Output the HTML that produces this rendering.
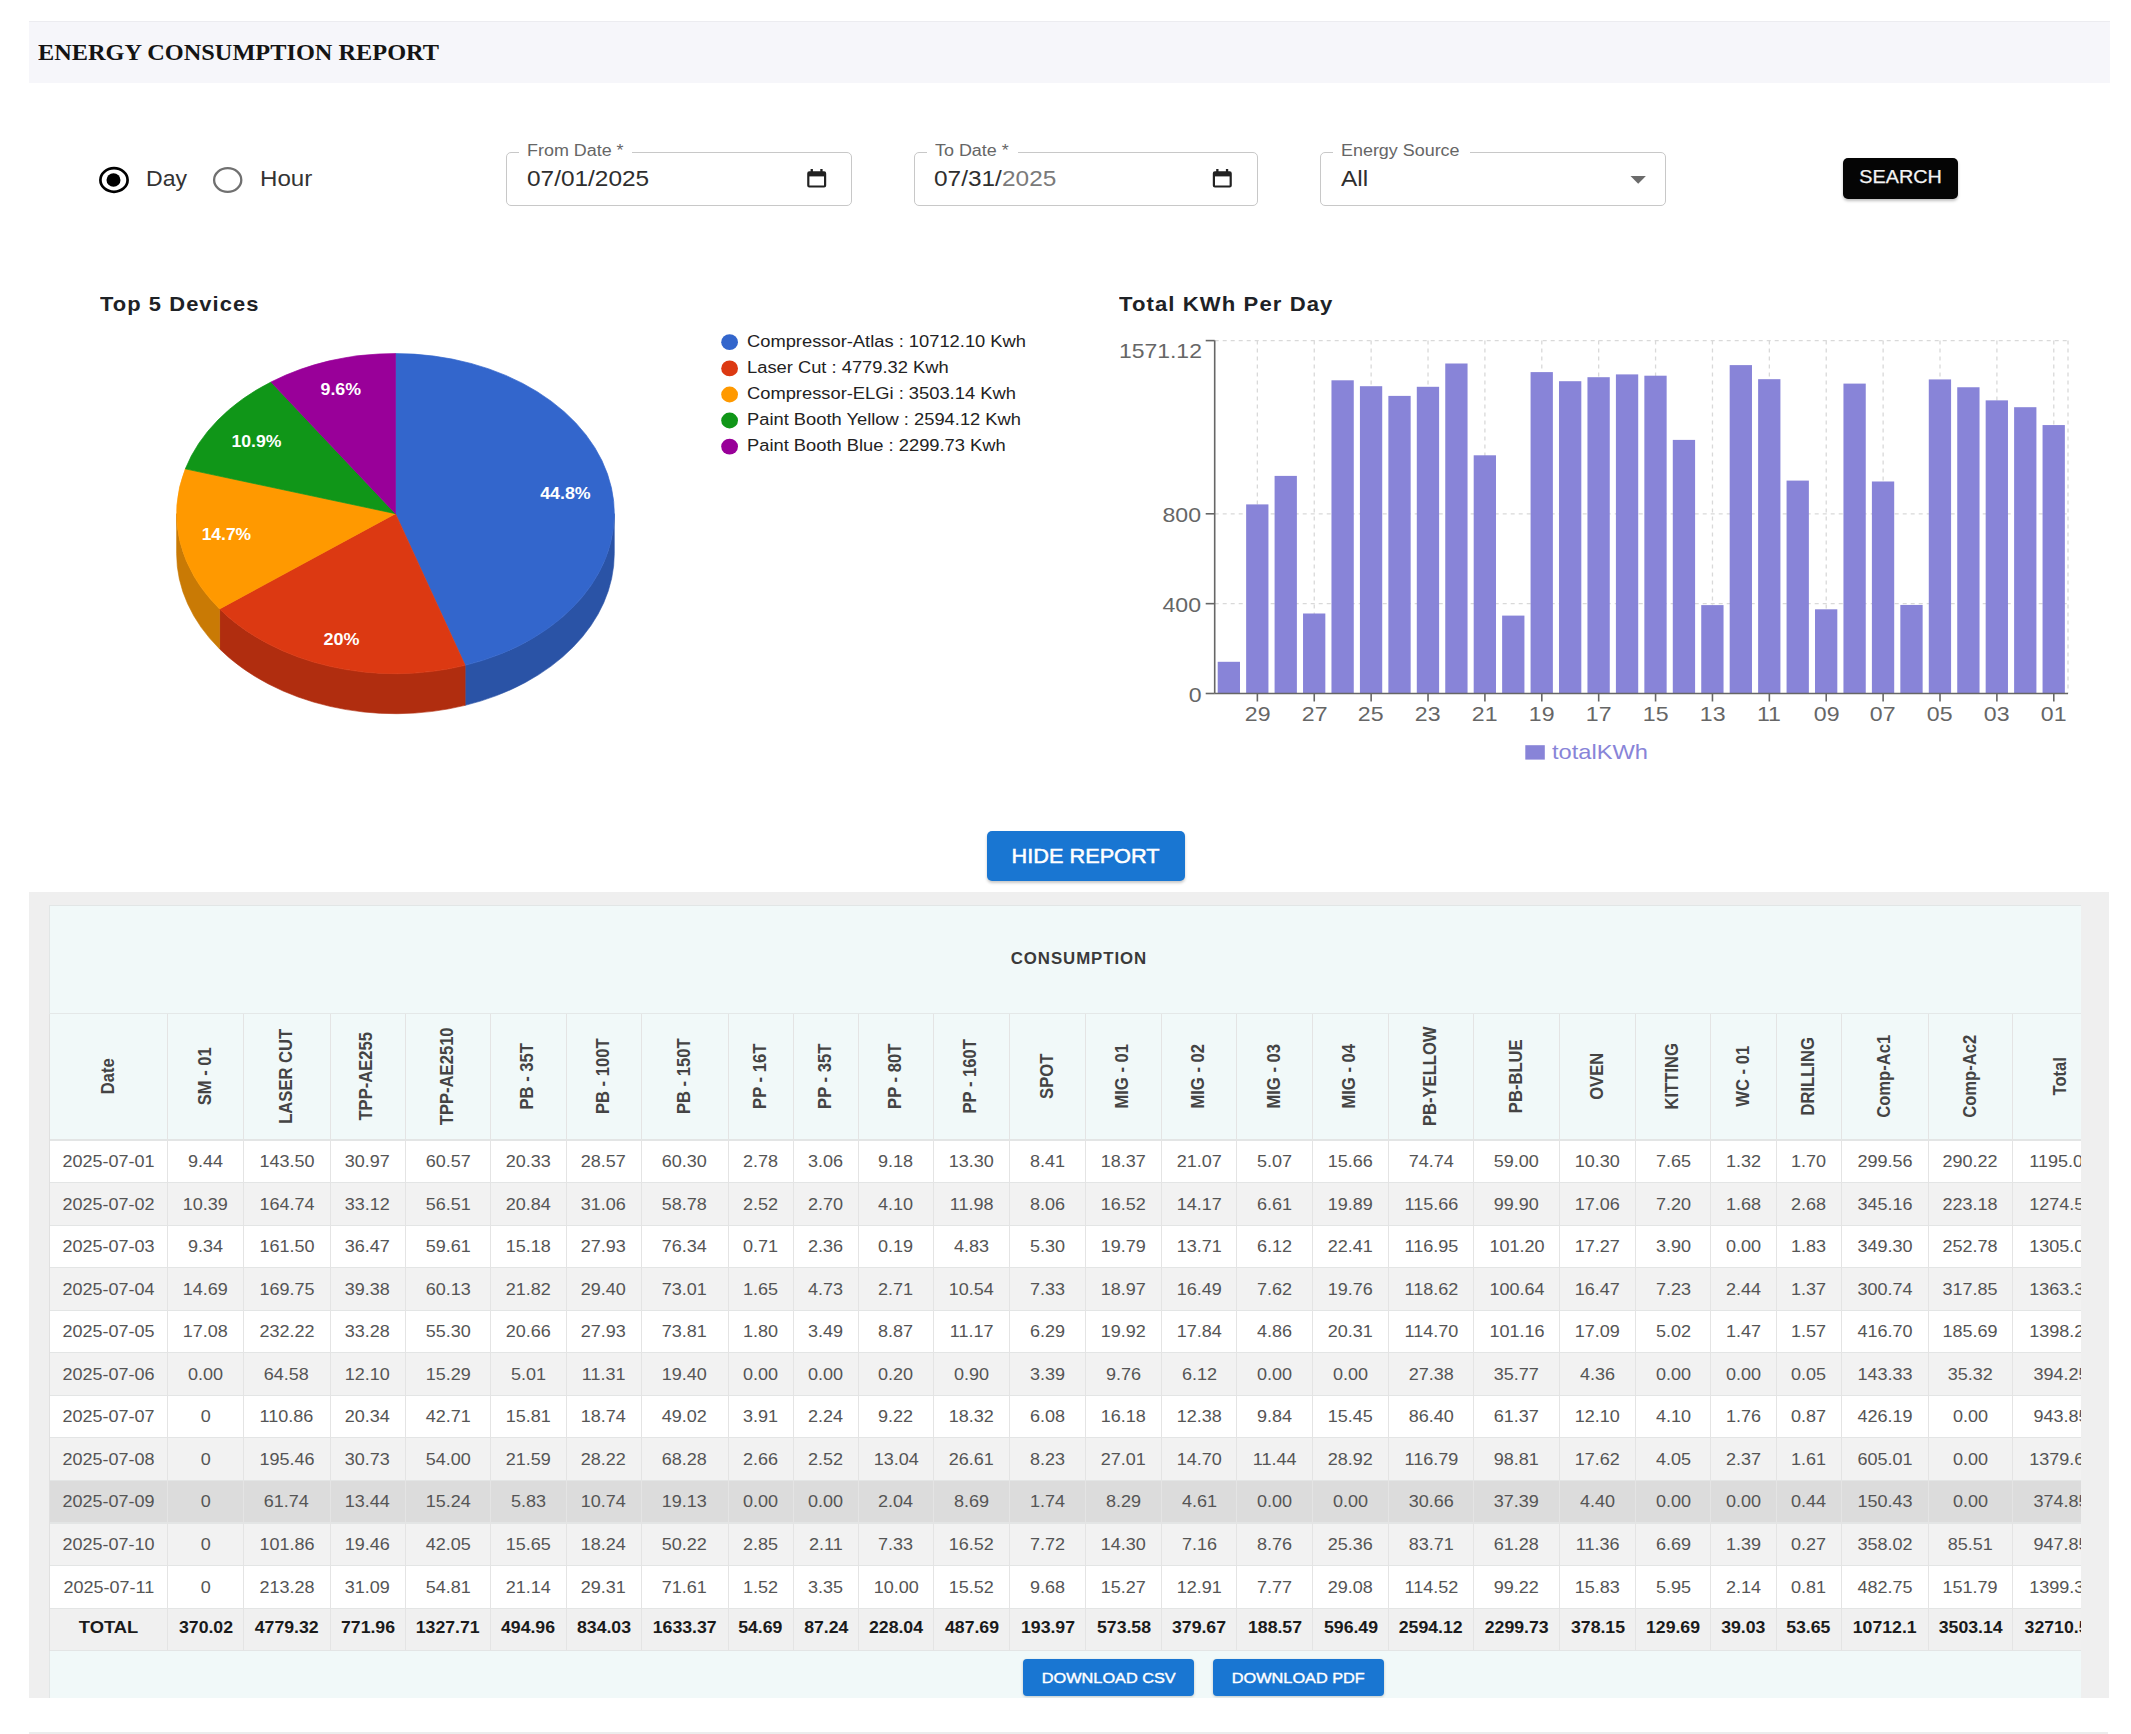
<!DOCTYPE html>
<html><head><meta charset="utf-8"><style>
html,body{margin:0;padding:0;background:#fff;width:2131px;height:1734px;overflow:hidden;position:relative;}
.t{position:absolute;white-space:pre;}
svg{position:absolute;left:0;top:0;}
</style></head><body>
<div style="position:absolute;left:29.00px;top:21.00px;width:2080.50px;height:62.00px;background:#f6f6fa;box-shadow:inset 0 1px 0 #ececf0;"></div>
<div style="position:absolute;left:506.30px;top:152.20px;width:346.10px;height:53.70px;box-sizing:border-box;border:1.4px solid #c8c8c8;border-radius:5px;"></div>
<div style="position:absolute;left:519.30px;top:150.20px;width:112.90px;height:5.00px;background:#fff;"></div>
<div style="position:absolute;left:913.80px;top:152.20px;width:344.20px;height:53.70px;box-sizing:border-box;border:1.4px solid #c8c8c8;border-radius:5px;"></div>
<div style="position:absolute;left:926.50px;top:150.20px;width:91.50px;height:5.00px;background:#fff;"></div>
<div style="position:absolute;left:1319.90px;top:152.20px;width:346.60px;height:53.70px;box-sizing:border-box;border:1.4px solid #c8c8c8;border-radius:5px;"></div>
<div style="position:absolute;left:1332.50px;top:150.20px;width:137.50px;height:5.00px;background:#fff;"></div>
<div style="position:absolute;left:1843.00px;top:157.50px;width:115.00px;height:41.10px;background:#050505;border-radius:5px;box-shadow:0 2px 3px rgba(0,0,0,.25);"></div>
<div style="position:absolute;left:987.30px;top:831.00px;width:198.00px;height:50.10px;background:#1976d2;border-radius:5px;box-shadow:0 2px 3px rgba(0,0,0,.22);"></div>
<div style="position:absolute;left:29.00px;top:891.80px;width:2079.50px;height:806.60px;background:#efefef;"></div>
<div style="position:absolute;left:48.6px;top:905.4px;width:2032.80px;height:793px;overflow:hidden;background:#f1f9f9;box-shadow:inset 1px 1px 0 #e2e6e6;">
<div style="position:absolute;left:0.70px;top:234.60px;width:2060.70px;height:42.55px;background:#ffffff;"></div>
<div style="position:absolute;left:0.70px;top:277.15px;width:2060.70px;height:42.55px;background:#f2f2f2;"></div>
<div style="position:absolute;left:0.70px;top:319.70px;width:2060.70px;height:42.55px;background:#ffffff;"></div>
<div style="position:absolute;left:0.70px;top:362.25px;width:2060.70px;height:42.55px;background:#f2f2f2;"></div>
<div style="position:absolute;left:0.70px;top:404.80px;width:2060.70px;height:42.55px;background:#ffffff;"></div>
<div style="position:absolute;left:0.70px;top:447.35px;width:2060.70px;height:42.55px;background:#f2f2f2;"></div>
<div style="position:absolute;left:0.70px;top:489.90px;width:2060.70px;height:42.55px;background:#ffffff;"></div>
<div style="position:absolute;left:0.70px;top:532.45px;width:2060.70px;height:42.55px;background:#f2f2f2;"></div>
<div style="position:absolute;left:0.70px;top:575.00px;width:2060.70px;height:42.55px;background:#dcdcdc;"></div>
<div style="position:absolute;left:0.70px;top:617.55px;width:2060.70px;height:42.55px;background:#f2f2f2;"></div>
<div style="position:absolute;left:0.70px;top:660.10px;width:2060.70px;height:42.55px;background:#ffffff;"></div>
<div style="position:absolute;left:0.70px;top:702.65px;width:2060.70px;height:42.55px;background:#f0f0f0;"></div>
<div style="position:absolute;left:0.70px;top:234.10px;width:2060.70px;height:1.10px;background:#e3e5e5;"></div>
<div style="position:absolute;left:0.70px;top:276.65px;width:2060.70px;height:1.10px;background:#e3e5e5;"></div>
<div style="position:absolute;left:0.70px;top:319.20px;width:2060.70px;height:1.10px;background:#e3e5e5;"></div>
<div style="position:absolute;left:0.70px;top:361.75px;width:2060.70px;height:1.10px;background:#e3e5e5;"></div>
<div style="position:absolute;left:0.70px;top:404.30px;width:2060.70px;height:1.10px;background:#e3e5e5;"></div>
<div style="position:absolute;left:0.70px;top:446.85px;width:2060.70px;height:1.10px;background:#e3e5e5;"></div>
<div style="position:absolute;left:0.70px;top:489.40px;width:2060.70px;height:1.10px;background:#e3e5e5;"></div>
<div style="position:absolute;left:0.70px;top:531.95px;width:2060.70px;height:1.10px;background:#e3e5e5;"></div>
<div style="position:absolute;left:0.70px;top:574.50px;width:2060.70px;height:1.10px;background:#e3e5e5;"></div>
<div style="position:absolute;left:0.70px;top:617.05px;width:2060.70px;height:1.10px;background:#e3e5e5;"></div>
<div style="position:absolute;left:0.70px;top:659.60px;width:2060.70px;height:1.10px;background:#e3e5e5;"></div>
<div style="position:absolute;left:0.70px;top:702.15px;width:2060.70px;height:1.10px;background:#e3e5e5;"></div>
<div style="position:absolute;left:0.70px;top:744.70px;width:2060.70px;height:1.10px;background:#e3e5e5;"></div>
<div style="position:absolute;left:0.70px;top:107.80px;width:2060.70px;height:1.00px;background:#e4e8e8;"></div>
<div style="position:absolute;left:118.70px;top:108.30px;width:1.00px;height:636.90px;background:#e4e4e4;"></div>
<div style="position:absolute;left:194.20px;top:108.30px;width:1.00px;height:636.90px;background:#e4e4e4;"></div>
<div style="position:absolute;left:281.00px;top:108.30px;width:1.00px;height:636.90px;background:#e4e4e4;"></div>
<div style="position:absolute;left:356.10px;top:108.30px;width:1.00px;height:636.90px;background:#e4e4e4;"></div>
<div style="position:absolute;left:441.40px;top:108.30px;width:1.00px;height:636.90px;background:#e4e4e4;"></div>
<div style="position:absolute;left:517.00px;top:108.30px;width:1.00px;height:636.90px;background:#e4e4e4;"></div>
<div style="position:absolute;left:592.20px;top:108.30px;width:1.00px;height:636.90px;background:#e4e4e4;"></div>
<div style="position:absolute;left:679.10px;top:108.30px;width:1.00px;height:636.90px;background:#e4e4e4;"></div>
<div style="position:absolute;left:744.20px;top:108.30px;width:1.00px;height:636.90px;background:#e4e4e4;"></div>
<div style="position:absolute;left:809.20px;top:108.30px;width:1.00px;height:636.90px;background:#e4e4e4;"></div>
<div style="position:absolute;left:884.30px;top:108.30px;width:1.00px;height:636.90px;background:#e4e4e4;"></div>
<div style="position:absolute;left:960.70px;top:108.30px;width:1.00px;height:636.90px;background:#e4e4e4;"></div>
<div style="position:absolute;left:1036.80px;top:108.30px;width:1.00px;height:636.90px;background:#e4e4e4;"></div>
<div style="position:absolute;left:1112.20px;top:108.30px;width:1.00px;height:636.90px;background:#e4e4e4;"></div>
<div style="position:absolute;left:1187.80px;top:108.30px;width:1.00px;height:636.90px;background:#e4e4e4;"></div>
<div style="position:absolute;left:1263.70px;top:108.30px;width:1.00px;height:636.90px;background:#e4e4e4;"></div>
<div style="position:absolute;left:1339.30px;top:108.30px;width:1.00px;height:636.90px;background:#e4e4e4;"></div>
<div style="position:absolute;left:1424.50px;top:108.30px;width:1.00px;height:636.90px;background:#e4e4e4;"></div>
<div style="position:absolute;left:1510.40px;top:108.30px;width:1.00px;height:636.90px;background:#e4e4e4;"></div>
<div style="position:absolute;left:1586.80px;top:108.30px;width:1.00px;height:636.90px;background:#e4e4e4;"></div>
<div style="position:absolute;left:1661.80px;top:108.30px;width:1.00px;height:636.90px;background:#e4e4e4;"></div>
<div style="position:absolute;left:1727.20px;top:108.30px;width:1.00px;height:636.90px;background:#e4e4e4;"></div>
<div style="position:absolute;left:1792.10px;top:108.30px;width:1.00px;height:636.90px;background:#e4e4e4;"></div>
<div style="position:absolute;left:1879.00px;top:108.30px;width:1.00px;height:636.90px;background:#e4e4e4;"></div>
<div style="position:absolute;left:1963.50px;top:108.30px;width:1.00px;height:636.90px;background:#e4e4e4;"></div>
<div style="position:absolute;left:0.10px;top:108.30px;width:1.20px;height:636.90px;background:#e0e0e0;"></div>
<div style="position:absolute;left:974.60px;top:753.90px;width:170.80px;height:36.80px;background:#1976d2;border-radius:4px;box-shadow:0 1px 3px rgba(0,0,0,.2);"></div>
<div style="position:absolute;left:1164.70px;top:753.90px;width:170.30px;height:36.80px;background:#1976d2;border-radius:4px;box-shadow:0 1px 3px rgba(0,0,0,.2);"></div>
<div style="position:absolute;left:-48.6px;top:-905.4px;width:2131px;height:1734px;">
<div class="t" style="left:1014.45px;top:951.26px;font:bold 16px/16px 'Liberation Sans';color:#3a3a3a;letter-spacing:0.9px;transform:scaleX(1.0508);transform-origin:center 50%;">CONSUMPTION</div>
<div class="t" style="left:65.07px;top:1153.08px;font:normal 17px/17px 'Liberation Sans';color:#555;letter-spacing:0px;transform:scaleX(1.0600);transform-origin:center 50%;">2025-07-01</div>
<div class="t" style="left:189.00px;top:1153.08px;font:normal 17px/17px 'Liberation Sans';color:#555;letter-spacing:0px;transform:scaleX(1.0600);transform-origin:center 50%;">9.44</div>
<div class="t" style="left:260.70px;top:1153.08px;font:normal 17px/17px 'Liberation Sans';color:#555;letter-spacing:0px;transform:scaleX(1.0600);transform-origin:center 50%;">143.50</div>
<div class="t" style="left:346.38px;top:1153.08px;font:normal 17px/17px 'Liberation Sans';color:#555;letter-spacing:0px;transform:scaleX(1.0600);transform-origin:center 50%;">30.97</div>
<div class="t" style="left:426.58px;top:1153.08px;font:normal 17px/17px 'Liberation Sans';color:#555;letter-spacing:0px;transform:scaleX(1.0600);transform-origin:center 50%;">60.57</div>
<div class="t" style="left:507.03px;top:1153.08px;font:normal 17px/17px 'Liberation Sans';color:#555;letter-spacing:0px;transform:scaleX(1.0600);transform-origin:center 50%;">20.33</div>
<div class="t" style="left:582.43px;top:1153.08px;font:normal 17px/17px 'Liberation Sans';color:#555;letter-spacing:0px;transform:scaleX(1.0600);transform-origin:center 50%;">28.57</div>
<div class="t" style="left:663.48px;top:1153.08px;font:normal 17px/17px 'Liberation Sans';color:#555;letter-spacing:0px;transform:scaleX(1.0600);transform-origin:center 50%;">60.30</div>
<div class="t" style="left:744.20px;top:1153.08px;font:normal 17px/17px 'Liberation Sans';color:#555;letter-spacing:0px;transform:scaleX(1.0600);transform-origin:center 50%;">2.78</div>
<div class="t" style="left:809.25px;top:1153.08px;font:normal 17px/17px 'Liberation Sans';color:#555;letter-spacing:0px;transform:scaleX(1.0600);transform-origin:center 50%;">3.06</div>
<div class="t" style="left:879.30px;top:1153.08px;font:normal 17px/17px 'Liberation Sans';color:#555;letter-spacing:0px;transform:scaleX(1.0600);transform-origin:center 50%;">9.18</div>
<div class="t" style="left:950.33px;top:1153.08px;font:normal 17px/17px 'Liberation Sans';color:#555;letter-spacing:0px;transform:scaleX(1.0600);transform-origin:center 50%;">13.30</div>
<div class="t" style="left:1031.30px;top:1153.08px;font:normal 17px/17px 'Liberation Sans';color:#555;letter-spacing:0px;transform:scaleX(1.0600);transform-origin:center 50%;">8.41</div>
<div class="t" style="left:1102.33px;top:1153.08px;font:normal 17px/17px 'Liberation Sans';color:#555;letter-spacing:0px;transform:scaleX(1.0600);transform-origin:center 50%;">18.37</div>
<div class="t" style="left:1177.83px;top:1153.08px;font:normal 17px/17px 'Liberation Sans';color:#555;letter-spacing:0px;transform:scaleX(1.0600);transform-origin:center 50%;">21.07</div>
<div class="t" style="left:1258.30px;top:1153.08px;font:normal 17px/17px 'Liberation Sans';color:#555;letter-spacing:0px;transform:scaleX(1.0600);transform-origin:center 50%;">5.07</div>
<div class="t" style="left:1329.33px;top:1153.08px;font:normal 17px/17px 'Liberation Sans';color:#555;letter-spacing:0px;transform:scaleX(1.0600);transform-origin:center 50%;">15.66</div>
<div class="t" style="left:1409.73px;top:1153.08px;font:normal 17px/17px 'Liberation Sans';color:#555;letter-spacing:0px;transform:scaleX(1.0600);transform-origin:center 50%;">74.74</div>
<div class="t" style="left:1495.28px;top:1153.08px;font:normal 17px/17px 'Liberation Sans';color:#555;letter-spacing:0px;transform:scaleX(1.0600);transform-origin:center 50%;">59.00</div>
<div class="t" style="left:1576.43px;top:1153.08px;font:normal 17px/17px 'Liberation Sans';color:#555;letter-spacing:0px;transform:scaleX(1.0600);transform-origin:center 50%;">10.30</div>
<div class="t" style="left:1656.85px;top:1153.08px;font:normal 17px/17px 'Liberation Sans';color:#555;letter-spacing:0px;transform:scaleX(1.0600);transform-origin:center 50%;">7.65</div>
<div class="t" style="left:1727.05px;top:1153.08px;font:normal 17px/17px 'Liberation Sans';color:#555;letter-spacing:0px;transform:scaleX(1.0600);transform-origin:center 50%;">1.32</div>
<div class="t" style="left:1792.20px;top:1153.08px;font:normal 17px/17px 'Liberation Sans';color:#555;letter-spacing:0px;transform:scaleX(1.0600);transform-origin:center 50%;">1.70</div>
<div class="t" style="left:1858.65px;top:1153.08px;font:normal 17px/17px 'Liberation Sans';color:#555;letter-spacing:0px;transform:scaleX(1.0600);transform-origin:center 50%;">299.56</div>
<div class="t" style="left:1944.35px;top:1153.08px;font:normal 17px/17px 'Liberation Sans';color:#555;letter-spacing:0px;transform:scaleX(1.0600);transform-origin:center 50%;">290.22</div>
<div class="t" style="left:2031.20px;top:1153.08px;font:normal 17px/17px 'Liberation Sans';color:#555;letter-spacing:0px;transform:scaleX(1.0600);transform-origin:center 50%;">1195.04</div>
<div class="t" style="left:65.07px;top:1195.63px;font:normal 17px/17px 'Liberation Sans';color:#555;letter-spacing:0px;transform:scaleX(1.0600);transform-origin:center 50%;">2025-07-02</div>
<div class="t" style="left:184.28px;top:1195.63px;font:normal 17px/17px 'Liberation Sans';color:#555;letter-spacing:0px;transform:scaleX(1.0600);transform-origin:center 50%;">10.39</div>
<div class="t" style="left:260.70px;top:1195.63px;font:normal 17px/17px 'Liberation Sans';color:#555;letter-spacing:0px;transform:scaleX(1.0600);transform-origin:center 50%;">164.74</div>
<div class="t" style="left:346.38px;top:1195.63px;font:normal 17px/17px 'Liberation Sans';color:#555;letter-spacing:0px;transform:scaleX(1.0600);transform-origin:center 50%;">33.12</div>
<div class="t" style="left:426.58px;top:1195.63px;font:normal 17px/17px 'Liberation Sans';color:#555;letter-spacing:0px;transform:scaleX(1.0600);transform-origin:center 50%;">56.51</div>
<div class="t" style="left:507.03px;top:1195.63px;font:normal 17px/17px 'Liberation Sans';color:#555;letter-spacing:0px;transform:scaleX(1.0600);transform-origin:center 50%;">20.84</div>
<div class="t" style="left:582.43px;top:1195.63px;font:normal 17px/17px 'Liberation Sans';color:#555;letter-spacing:0px;transform:scaleX(1.0600);transform-origin:center 50%;">31.06</div>
<div class="t" style="left:663.48px;top:1195.63px;font:normal 17px/17px 'Liberation Sans';color:#555;letter-spacing:0px;transform:scaleX(1.0600);transform-origin:center 50%;">58.78</div>
<div class="t" style="left:744.20px;top:1195.63px;font:normal 17px/17px 'Liberation Sans';color:#555;letter-spacing:0px;transform:scaleX(1.0600);transform-origin:center 50%;">2.52</div>
<div class="t" style="left:809.25px;top:1195.63px;font:normal 17px/17px 'Liberation Sans';color:#555;letter-spacing:0px;transform:scaleX(1.0600);transform-origin:center 50%;">2.70</div>
<div class="t" style="left:879.30px;top:1195.63px;font:normal 17px/17px 'Liberation Sans';color:#555;letter-spacing:0px;transform:scaleX(1.0600);transform-origin:center 50%;">4.10</div>
<div class="t" style="left:950.96px;top:1195.63px;font:normal 17px/17px 'Liberation Sans';color:#555;letter-spacing:0px;transform:scaleX(1.0600);transform-origin:center 50%;">11.98</div>
<div class="t" style="left:1031.30px;top:1195.63px;font:normal 17px/17px 'Liberation Sans';color:#555;letter-spacing:0px;transform:scaleX(1.0600);transform-origin:center 50%;">8.06</div>
<div class="t" style="left:1102.33px;top:1195.63px;font:normal 17px/17px 'Liberation Sans';color:#555;letter-spacing:0px;transform:scaleX(1.0600);transform-origin:center 50%;">16.52</div>
<div class="t" style="left:1177.83px;top:1195.63px;font:normal 17px/17px 'Liberation Sans';color:#555;letter-spacing:0px;transform:scaleX(1.0600);transform-origin:center 50%;">14.17</div>
<div class="t" style="left:1258.30px;top:1195.63px;font:normal 17px/17px 'Liberation Sans';color:#555;letter-spacing:0px;transform:scaleX(1.0600);transform-origin:center 50%;">6.61</div>
<div class="t" style="left:1329.33px;top:1195.63px;font:normal 17px/17px 'Liberation Sans';color:#555;letter-spacing:0px;transform:scaleX(1.0600);transform-origin:center 50%;">19.89</div>
<div class="t" style="left:1405.63px;top:1195.63px;font:normal 17px/17px 'Liberation Sans';color:#555;letter-spacing:0px;transform:scaleX(1.0600);transform-origin:center 50%;">115.66</div>
<div class="t" style="left:1495.28px;top:1195.63px;font:normal 17px/17px 'Liberation Sans';color:#555;letter-spacing:0px;transform:scaleX(1.0600);transform-origin:center 50%;">99.90</div>
<div class="t" style="left:1576.43px;top:1195.63px;font:normal 17px/17px 'Liberation Sans';color:#555;letter-spacing:0px;transform:scaleX(1.0600);transform-origin:center 50%;">17.06</div>
<div class="t" style="left:1656.85px;top:1195.63px;font:normal 17px/17px 'Liberation Sans';color:#555;letter-spacing:0px;transform:scaleX(1.0600);transform-origin:center 50%;">7.20</div>
<div class="t" style="left:1727.05px;top:1195.63px;font:normal 17px/17px 'Liberation Sans';color:#555;letter-spacing:0px;transform:scaleX(1.0600);transform-origin:center 50%;">1.68</div>
<div class="t" style="left:1792.20px;top:1195.63px;font:normal 17px/17px 'Liberation Sans';color:#555;letter-spacing:0px;transform:scaleX(1.0600);transform-origin:center 50%;">2.68</div>
<div class="t" style="left:1858.65px;top:1195.63px;font:normal 17px/17px 'Liberation Sans';color:#555;letter-spacing:0px;transform:scaleX(1.0600);transform-origin:center 50%;">345.16</div>
<div class="t" style="left:1944.35px;top:1195.63px;font:normal 17px/17px 'Liberation Sans';color:#555;letter-spacing:0px;transform:scaleX(1.0600);transform-origin:center 50%;">223.18</div>
<div class="t" style="left:2030.57px;top:1195.63px;font:normal 17px/17px 'Liberation Sans';color:#555;letter-spacing:0px;transform:scaleX(1.0600);transform-origin:center 50%;">1274.55</div>
<div class="t" style="left:65.07px;top:1238.18px;font:normal 17px/17px 'Liberation Sans';color:#555;letter-spacing:0px;transform:scaleX(1.0600);transform-origin:center 50%;">2025-07-03</div>
<div class="t" style="left:189.00px;top:1238.18px;font:normal 17px/17px 'Liberation Sans';color:#555;letter-spacing:0px;transform:scaleX(1.0600);transform-origin:center 50%;">9.34</div>
<div class="t" style="left:260.70px;top:1238.18px;font:normal 17px/17px 'Liberation Sans';color:#555;letter-spacing:0px;transform:scaleX(1.0600);transform-origin:center 50%;">161.50</div>
<div class="t" style="left:346.38px;top:1238.18px;font:normal 17px/17px 'Liberation Sans';color:#555;letter-spacing:0px;transform:scaleX(1.0600);transform-origin:center 50%;">36.47</div>
<div class="t" style="left:426.58px;top:1238.18px;font:normal 17px/17px 'Liberation Sans';color:#555;letter-spacing:0px;transform:scaleX(1.0600);transform-origin:center 50%;">59.61</div>
<div class="t" style="left:507.03px;top:1238.18px;font:normal 17px/17px 'Liberation Sans';color:#555;letter-spacing:0px;transform:scaleX(1.0600);transform-origin:center 50%;">15.18</div>
<div class="t" style="left:582.43px;top:1238.18px;font:normal 17px/17px 'Liberation Sans';color:#555;letter-spacing:0px;transform:scaleX(1.0600);transform-origin:center 50%;">27.93</div>
<div class="t" style="left:663.48px;top:1238.18px;font:normal 17px/17px 'Liberation Sans';color:#555;letter-spacing:0px;transform:scaleX(1.0600);transform-origin:center 50%;">76.34</div>
<div class="t" style="left:744.20px;top:1238.18px;font:normal 17px/17px 'Liberation Sans';color:#555;letter-spacing:0px;transform:scaleX(1.0600);transform-origin:center 50%;">0.71</div>
<div class="t" style="left:809.25px;top:1238.18px;font:normal 17px/17px 'Liberation Sans';color:#555;letter-spacing:0px;transform:scaleX(1.0600);transform-origin:center 50%;">2.36</div>
<div class="t" style="left:879.30px;top:1238.18px;font:normal 17px/17px 'Liberation Sans';color:#555;letter-spacing:0px;transform:scaleX(1.0600);transform-origin:center 50%;">0.19</div>
<div class="t" style="left:955.05px;top:1238.18px;font:normal 17px/17px 'Liberation Sans';color:#555;letter-spacing:0px;transform:scaleX(1.0600);transform-origin:center 50%;">4.83</div>
<div class="t" style="left:1031.30px;top:1238.18px;font:normal 17px/17px 'Liberation Sans';color:#555;letter-spacing:0px;transform:scaleX(1.0600);transform-origin:center 50%;">5.30</div>
<div class="t" style="left:1102.33px;top:1238.18px;font:normal 17px/17px 'Liberation Sans';color:#555;letter-spacing:0px;transform:scaleX(1.0600);transform-origin:center 50%;">19.79</div>
<div class="t" style="left:1177.83px;top:1238.18px;font:normal 17px/17px 'Liberation Sans';color:#555;letter-spacing:0px;transform:scaleX(1.0600);transform-origin:center 50%;">13.71</div>
<div class="t" style="left:1258.30px;top:1238.18px;font:normal 17px/17px 'Liberation Sans';color:#555;letter-spacing:0px;transform:scaleX(1.0600);transform-origin:center 50%;">6.12</div>
<div class="t" style="left:1329.33px;top:1238.18px;font:normal 17px/17px 'Liberation Sans';color:#555;letter-spacing:0px;transform:scaleX(1.0600);transform-origin:center 50%;">22.41</div>
<div class="t" style="left:1405.63px;top:1238.18px;font:normal 17px/17px 'Liberation Sans';color:#555;letter-spacing:0px;transform:scaleX(1.0600);transform-origin:center 50%;">116.95</div>
<div class="t" style="left:1490.55px;top:1238.18px;font:normal 17px/17px 'Liberation Sans';color:#555;letter-spacing:0px;transform:scaleX(1.0600);transform-origin:center 50%;">101.20</div>
<div class="t" style="left:1576.43px;top:1238.18px;font:normal 17px/17px 'Liberation Sans';color:#555;letter-spacing:0px;transform:scaleX(1.0600);transform-origin:center 50%;">17.27</div>
<div class="t" style="left:1656.85px;top:1238.18px;font:normal 17px/17px 'Liberation Sans';color:#555;letter-spacing:0px;transform:scaleX(1.0600);transform-origin:center 50%;">3.90</div>
<div class="t" style="left:1727.05px;top:1238.18px;font:normal 17px/17px 'Liberation Sans';color:#555;letter-spacing:0px;transform:scaleX(1.0600);transform-origin:center 50%;">0.00</div>
<div class="t" style="left:1792.20px;top:1238.18px;font:normal 17px/17px 'Liberation Sans';color:#555;letter-spacing:0px;transform:scaleX(1.0600);transform-origin:center 50%;">1.83</div>
<div class="t" style="left:1858.65px;top:1238.18px;font:normal 17px/17px 'Liberation Sans';color:#555;letter-spacing:0px;transform:scaleX(1.0600);transform-origin:center 50%;">349.30</div>
<div class="t" style="left:1944.35px;top:1238.18px;font:normal 17px/17px 'Liberation Sans';color:#555;letter-spacing:0px;transform:scaleX(1.0600);transform-origin:center 50%;">252.78</div>
<div class="t" style="left:2030.57px;top:1238.18px;font:normal 17px/17px 'Liberation Sans';color:#555;letter-spacing:0px;transform:scaleX(1.0600);transform-origin:center 50%;">1305.05</div>
<div class="t" style="left:65.07px;top:1280.73px;font:normal 17px/17px 'Liberation Sans';color:#555;letter-spacing:0px;transform:scaleX(1.0600);transform-origin:center 50%;">2025-07-04</div>
<div class="t" style="left:184.28px;top:1280.73px;font:normal 17px/17px 'Liberation Sans';color:#555;letter-spacing:0px;transform:scaleX(1.0600);transform-origin:center 50%;">14.69</div>
<div class="t" style="left:260.70px;top:1280.73px;font:normal 17px/17px 'Liberation Sans';color:#555;letter-spacing:0px;transform:scaleX(1.0600);transform-origin:center 50%;">169.75</div>
<div class="t" style="left:346.38px;top:1280.73px;font:normal 17px/17px 'Liberation Sans';color:#555;letter-spacing:0px;transform:scaleX(1.0600);transform-origin:center 50%;">39.38</div>
<div class="t" style="left:426.58px;top:1280.73px;font:normal 17px/17px 'Liberation Sans';color:#555;letter-spacing:0px;transform:scaleX(1.0600);transform-origin:center 50%;">60.13</div>
<div class="t" style="left:507.03px;top:1280.73px;font:normal 17px/17px 'Liberation Sans';color:#555;letter-spacing:0px;transform:scaleX(1.0600);transform-origin:center 50%;">21.82</div>
<div class="t" style="left:582.43px;top:1280.73px;font:normal 17px/17px 'Liberation Sans';color:#555;letter-spacing:0px;transform:scaleX(1.0600);transform-origin:center 50%;">29.40</div>
<div class="t" style="left:663.48px;top:1280.73px;font:normal 17px/17px 'Liberation Sans';color:#555;letter-spacing:0px;transform:scaleX(1.0600);transform-origin:center 50%;">73.01</div>
<div class="t" style="left:744.20px;top:1280.73px;font:normal 17px/17px 'Liberation Sans';color:#555;letter-spacing:0px;transform:scaleX(1.0600);transform-origin:center 50%;">1.65</div>
<div class="t" style="left:809.25px;top:1280.73px;font:normal 17px/17px 'Liberation Sans';color:#555;letter-spacing:0px;transform:scaleX(1.0600);transform-origin:center 50%;">4.73</div>
<div class="t" style="left:879.30px;top:1280.73px;font:normal 17px/17px 'Liberation Sans';color:#555;letter-spacing:0px;transform:scaleX(1.0600);transform-origin:center 50%;">2.71</div>
<div class="t" style="left:950.33px;top:1280.73px;font:normal 17px/17px 'Liberation Sans';color:#555;letter-spacing:0px;transform:scaleX(1.0600);transform-origin:center 50%;">10.54</div>
<div class="t" style="left:1031.30px;top:1280.73px;font:normal 17px/17px 'Liberation Sans';color:#555;letter-spacing:0px;transform:scaleX(1.0600);transform-origin:center 50%;">7.33</div>
<div class="t" style="left:1102.33px;top:1280.73px;font:normal 17px/17px 'Liberation Sans';color:#555;letter-spacing:0px;transform:scaleX(1.0600);transform-origin:center 50%;">18.97</div>
<div class="t" style="left:1177.83px;top:1280.73px;font:normal 17px/17px 'Liberation Sans';color:#555;letter-spacing:0px;transform:scaleX(1.0600);transform-origin:center 50%;">16.49</div>
<div class="t" style="left:1258.30px;top:1280.73px;font:normal 17px/17px 'Liberation Sans';color:#555;letter-spacing:0px;transform:scaleX(1.0600);transform-origin:center 50%;">7.62</div>
<div class="t" style="left:1329.33px;top:1280.73px;font:normal 17px/17px 'Liberation Sans';color:#555;letter-spacing:0px;transform:scaleX(1.0600);transform-origin:center 50%;">19.76</div>
<div class="t" style="left:1405.63px;top:1280.73px;font:normal 17px/17px 'Liberation Sans';color:#555;letter-spacing:0px;transform:scaleX(1.0600);transform-origin:center 50%;">118.62</div>
<div class="t" style="left:1490.55px;top:1280.73px;font:normal 17px/17px 'Liberation Sans';color:#555;letter-spacing:0px;transform:scaleX(1.0600);transform-origin:center 50%;">100.64</div>
<div class="t" style="left:1576.43px;top:1280.73px;font:normal 17px/17px 'Liberation Sans';color:#555;letter-spacing:0px;transform:scaleX(1.0600);transform-origin:center 50%;">16.47</div>
<div class="t" style="left:1656.85px;top:1280.73px;font:normal 17px/17px 'Liberation Sans';color:#555;letter-spacing:0px;transform:scaleX(1.0600);transform-origin:center 50%;">7.23</div>
<div class="t" style="left:1727.05px;top:1280.73px;font:normal 17px/17px 'Liberation Sans';color:#555;letter-spacing:0px;transform:scaleX(1.0600);transform-origin:center 50%;">2.44</div>
<div class="t" style="left:1792.20px;top:1280.73px;font:normal 17px/17px 'Liberation Sans';color:#555;letter-spacing:0px;transform:scaleX(1.0600);transform-origin:center 50%;">1.37</div>
<div class="t" style="left:1858.65px;top:1280.73px;font:normal 17px/17px 'Liberation Sans';color:#555;letter-spacing:0px;transform:scaleX(1.0600);transform-origin:center 50%;">300.74</div>
<div class="t" style="left:1944.35px;top:1280.73px;font:normal 17px/17px 'Liberation Sans';color:#555;letter-spacing:0px;transform:scaleX(1.0600);transform-origin:center 50%;">317.85</div>
<div class="t" style="left:2030.57px;top:1280.73px;font:normal 17px/17px 'Liberation Sans';color:#555;letter-spacing:0px;transform:scaleX(1.0600);transform-origin:center 50%;">1363.33</div>
<div class="t" style="left:65.07px;top:1323.28px;font:normal 17px/17px 'Liberation Sans';color:#555;letter-spacing:0px;transform:scaleX(1.0600);transform-origin:center 50%;">2025-07-05</div>
<div class="t" style="left:184.28px;top:1323.28px;font:normal 17px/17px 'Liberation Sans';color:#555;letter-spacing:0px;transform:scaleX(1.0600);transform-origin:center 50%;">17.08</div>
<div class="t" style="left:260.70px;top:1323.28px;font:normal 17px/17px 'Liberation Sans';color:#555;letter-spacing:0px;transform:scaleX(1.0600);transform-origin:center 50%;">232.22</div>
<div class="t" style="left:346.38px;top:1323.28px;font:normal 17px/17px 'Liberation Sans';color:#555;letter-spacing:0px;transform:scaleX(1.0600);transform-origin:center 50%;">33.28</div>
<div class="t" style="left:426.58px;top:1323.28px;font:normal 17px/17px 'Liberation Sans';color:#555;letter-spacing:0px;transform:scaleX(1.0600);transform-origin:center 50%;">55.30</div>
<div class="t" style="left:507.03px;top:1323.28px;font:normal 17px/17px 'Liberation Sans';color:#555;letter-spacing:0px;transform:scaleX(1.0600);transform-origin:center 50%;">20.66</div>
<div class="t" style="left:582.43px;top:1323.28px;font:normal 17px/17px 'Liberation Sans';color:#555;letter-spacing:0px;transform:scaleX(1.0600);transform-origin:center 50%;">27.93</div>
<div class="t" style="left:663.48px;top:1323.28px;font:normal 17px/17px 'Liberation Sans';color:#555;letter-spacing:0px;transform:scaleX(1.0600);transform-origin:center 50%;">73.81</div>
<div class="t" style="left:744.20px;top:1323.28px;font:normal 17px/17px 'Liberation Sans';color:#555;letter-spacing:0px;transform:scaleX(1.0600);transform-origin:center 50%;">1.80</div>
<div class="t" style="left:809.25px;top:1323.28px;font:normal 17px/17px 'Liberation Sans';color:#555;letter-spacing:0px;transform:scaleX(1.0600);transform-origin:center 50%;">3.49</div>
<div class="t" style="left:879.30px;top:1323.28px;font:normal 17px/17px 'Liberation Sans';color:#555;letter-spacing:0px;transform:scaleX(1.0600);transform-origin:center 50%;">8.87</div>
<div class="t" style="left:950.96px;top:1323.28px;font:normal 17px/17px 'Liberation Sans';color:#555;letter-spacing:0px;transform:scaleX(1.0600);transform-origin:center 50%;">11.17</div>
<div class="t" style="left:1031.30px;top:1323.28px;font:normal 17px/17px 'Liberation Sans';color:#555;letter-spacing:0px;transform:scaleX(1.0600);transform-origin:center 50%;">6.29</div>
<div class="t" style="left:1102.33px;top:1323.28px;font:normal 17px/17px 'Liberation Sans';color:#555;letter-spacing:0px;transform:scaleX(1.0600);transform-origin:center 50%;">19.92</div>
<div class="t" style="left:1177.83px;top:1323.28px;font:normal 17px/17px 'Liberation Sans';color:#555;letter-spacing:0px;transform:scaleX(1.0600);transform-origin:center 50%;">17.84</div>
<div class="t" style="left:1258.30px;top:1323.28px;font:normal 17px/17px 'Liberation Sans';color:#555;letter-spacing:0px;transform:scaleX(1.0600);transform-origin:center 50%;">4.86</div>
<div class="t" style="left:1329.33px;top:1323.28px;font:normal 17px/17px 'Liberation Sans';color:#555;letter-spacing:0px;transform:scaleX(1.0600);transform-origin:center 50%;">20.31</div>
<div class="t" style="left:1405.63px;top:1323.28px;font:normal 17px/17px 'Liberation Sans';color:#555;letter-spacing:0px;transform:scaleX(1.0600);transform-origin:center 50%;">114.70</div>
<div class="t" style="left:1490.55px;top:1323.28px;font:normal 17px/17px 'Liberation Sans';color:#555;letter-spacing:0px;transform:scaleX(1.0600);transform-origin:center 50%;">101.16</div>
<div class="t" style="left:1576.43px;top:1323.28px;font:normal 17px/17px 'Liberation Sans';color:#555;letter-spacing:0px;transform:scaleX(1.0600);transform-origin:center 50%;">17.09</div>
<div class="t" style="left:1656.85px;top:1323.28px;font:normal 17px/17px 'Liberation Sans';color:#555;letter-spacing:0px;transform:scaleX(1.0600);transform-origin:center 50%;">5.02</div>
<div class="t" style="left:1727.05px;top:1323.28px;font:normal 17px/17px 'Liberation Sans';color:#555;letter-spacing:0px;transform:scaleX(1.0600);transform-origin:center 50%;">1.47</div>
<div class="t" style="left:1792.20px;top:1323.28px;font:normal 17px/17px 'Liberation Sans';color:#555;letter-spacing:0px;transform:scaleX(1.0600);transform-origin:center 50%;">1.57</div>
<div class="t" style="left:1858.65px;top:1323.28px;font:normal 17px/17px 'Liberation Sans';color:#555;letter-spacing:0px;transform:scaleX(1.0600);transform-origin:center 50%;">416.70</div>
<div class="t" style="left:1944.35px;top:1323.28px;font:normal 17px/17px 'Liberation Sans';color:#555;letter-spacing:0px;transform:scaleX(1.0600);transform-origin:center 50%;">185.69</div>
<div class="t" style="left:2030.57px;top:1323.28px;font:normal 17px/17px 'Liberation Sans';color:#555;letter-spacing:0px;transform:scaleX(1.0600);transform-origin:center 50%;">1398.25</div>
<div class="t" style="left:65.07px;top:1365.83px;font:normal 17px/17px 'Liberation Sans';color:#555;letter-spacing:0px;transform:scaleX(1.0600);transform-origin:center 50%;">2025-07-06</div>
<div class="t" style="left:189.00px;top:1365.83px;font:normal 17px/17px 'Liberation Sans';color:#555;letter-spacing:0px;transform:scaleX(1.0600);transform-origin:center 50%;">0.00</div>
<div class="t" style="left:265.43px;top:1365.83px;font:normal 17px/17px 'Liberation Sans';color:#555;letter-spacing:0px;transform:scaleX(1.0600);transform-origin:center 50%;">64.58</div>
<div class="t" style="left:346.38px;top:1365.83px;font:normal 17px/17px 'Liberation Sans';color:#555;letter-spacing:0px;transform:scaleX(1.0600);transform-origin:center 50%;">12.10</div>
<div class="t" style="left:426.58px;top:1365.83px;font:normal 17px/17px 'Liberation Sans';color:#555;letter-spacing:0px;transform:scaleX(1.0600);transform-origin:center 50%;">15.29</div>
<div class="t" style="left:511.75px;top:1365.83px;font:normal 17px/17px 'Liberation Sans';color:#555;letter-spacing:0px;transform:scaleX(1.0600);transform-origin:center 50%;">5.01</div>
<div class="t" style="left:583.06px;top:1365.83px;font:normal 17px/17px 'Liberation Sans';color:#555;letter-spacing:0px;transform:scaleX(1.0600);transform-origin:center 50%;">11.31</div>
<div class="t" style="left:663.48px;top:1365.83px;font:normal 17px/17px 'Liberation Sans';color:#555;letter-spacing:0px;transform:scaleX(1.0600);transform-origin:center 50%;">19.40</div>
<div class="t" style="left:744.20px;top:1365.83px;font:normal 17px/17px 'Liberation Sans';color:#555;letter-spacing:0px;transform:scaleX(1.0600);transform-origin:center 50%;">0.00</div>
<div class="t" style="left:809.25px;top:1365.83px;font:normal 17px/17px 'Liberation Sans';color:#555;letter-spacing:0px;transform:scaleX(1.0600);transform-origin:center 50%;">0.00</div>
<div class="t" style="left:879.30px;top:1365.83px;font:normal 17px/17px 'Liberation Sans';color:#555;letter-spacing:0px;transform:scaleX(1.0600);transform-origin:center 50%;">0.20</div>
<div class="t" style="left:955.05px;top:1365.83px;font:normal 17px/17px 'Liberation Sans';color:#555;letter-spacing:0px;transform:scaleX(1.0600);transform-origin:center 50%;">0.90</div>
<div class="t" style="left:1031.30px;top:1365.83px;font:normal 17px/17px 'Liberation Sans';color:#555;letter-spacing:0px;transform:scaleX(1.0600);transform-origin:center 50%;">3.39</div>
<div class="t" style="left:1107.05px;top:1365.83px;font:normal 17px/17px 'Liberation Sans';color:#555;letter-spacing:0px;transform:scaleX(1.0600);transform-origin:center 50%;">9.76</div>
<div class="t" style="left:1182.55px;top:1365.83px;font:normal 17px/17px 'Liberation Sans';color:#555;letter-spacing:0px;transform:scaleX(1.0600);transform-origin:center 50%;">6.12</div>
<div class="t" style="left:1258.30px;top:1365.83px;font:normal 17px/17px 'Liberation Sans';color:#555;letter-spacing:0px;transform:scaleX(1.0600);transform-origin:center 50%;">0.00</div>
<div class="t" style="left:1334.05px;top:1365.83px;font:normal 17px/17px 'Liberation Sans';color:#555;letter-spacing:0px;transform:scaleX(1.0600);transform-origin:center 50%;">0.00</div>
<div class="t" style="left:1409.73px;top:1365.83px;font:normal 17px/17px 'Liberation Sans';color:#555;letter-spacing:0px;transform:scaleX(1.0600);transform-origin:center 50%;">27.38</div>
<div class="t" style="left:1495.28px;top:1365.83px;font:normal 17px/17px 'Liberation Sans';color:#555;letter-spacing:0px;transform:scaleX(1.0600);transform-origin:center 50%;">35.77</div>
<div class="t" style="left:1581.15px;top:1365.83px;font:normal 17px/17px 'Liberation Sans';color:#555;letter-spacing:0px;transform:scaleX(1.0600);transform-origin:center 50%;">4.36</div>
<div class="t" style="left:1656.85px;top:1365.83px;font:normal 17px/17px 'Liberation Sans';color:#555;letter-spacing:0px;transform:scaleX(1.0600);transform-origin:center 50%;">0.00</div>
<div class="t" style="left:1727.05px;top:1365.83px;font:normal 17px/17px 'Liberation Sans';color:#555;letter-spacing:0px;transform:scaleX(1.0600);transform-origin:center 50%;">0.00</div>
<div class="t" style="left:1792.20px;top:1365.83px;font:normal 17px/17px 'Liberation Sans';color:#555;letter-spacing:0px;transform:scaleX(1.0600);transform-origin:center 50%;">0.05</div>
<div class="t" style="left:1858.65px;top:1365.83px;font:normal 17px/17px 'Liberation Sans';color:#555;letter-spacing:0px;transform:scaleX(1.0600);transform-origin:center 50%;">143.33</div>
<div class="t" style="left:1949.08px;top:1365.83px;font:normal 17px/17px 'Liberation Sans';color:#555;letter-spacing:0px;transform:scaleX(1.0600);transform-origin:center 50%;">35.32</div>
<div class="t" style="left:2035.30px;top:1365.83px;font:normal 17px/17px 'Liberation Sans';color:#555;letter-spacing:0px;transform:scaleX(1.0600);transform-origin:center 50%;">394.25</div>
<div class="t" style="left:65.07px;top:1408.38px;font:normal 17px/17px 'Liberation Sans';color:#555;letter-spacing:0px;transform:scaleX(1.0600);transform-origin:center 50%;">2025-07-07</div>
<div class="t" style="left:200.82px;top:1408.38px;font:normal 17px/17px 'Liberation Sans';color:#555;letter-spacing:0px;transform:scaleX(1.0600);transform-origin:center 50%;">0</div>
<div class="t" style="left:261.33px;top:1408.38px;font:normal 17px/17px 'Liberation Sans';color:#555;letter-spacing:0px;transform:scaleX(1.0600);transform-origin:center 50%;">110.86</div>
<div class="t" style="left:346.38px;top:1408.38px;font:normal 17px/17px 'Liberation Sans';color:#555;letter-spacing:0px;transform:scaleX(1.0600);transform-origin:center 50%;">20.34</div>
<div class="t" style="left:426.58px;top:1408.38px;font:normal 17px/17px 'Liberation Sans';color:#555;letter-spacing:0px;transform:scaleX(1.0600);transform-origin:center 50%;">42.71</div>
<div class="t" style="left:507.03px;top:1408.38px;font:normal 17px/17px 'Liberation Sans';color:#555;letter-spacing:0px;transform:scaleX(1.0600);transform-origin:center 50%;">15.81</div>
<div class="t" style="left:582.43px;top:1408.38px;font:normal 17px/17px 'Liberation Sans';color:#555;letter-spacing:0px;transform:scaleX(1.0600);transform-origin:center 50%;">18.74</div>
<div class="t" style="left:663.48px;top:1408.38px;font:normal 17px/17px 'Liberation Sans';color:#555;letter-spacing:0px;transform:scaleX(1.0600);transform-origin:center 50%;">49.02</div>
<div class="t" style="left:744.20px;top:1408.38px;font:normal 17px/17px 'Liberation Sans';color:#555;letter-spacing:0px;transform:scaleX(1.0600);transform-origin:center 50%;">3.91</div>
<div class="t" style="left:809.25px;top:1408.38px;font:normal 17px/17px 'Liberation Sans';color:#555;letter-spacing:0px;transform:scaleX(1.0600);transform-origin:center 50%;">2.24</div>
<div class="t" style="left:879.30px;top:1408.38px;font:normal 17px/17px 'Liberation Sans';color:#555;letter-spacing:0px;transform:scaleX(1.0600);transform-origin:center 50%;">9.22</div>
<div class="t" style="left:950.33px;top:1408.38px;font:normal 17px/17px 'Liberation Sans';color:#555;letter-spacing:0px;transform:scaleX(1.0600);transform-origin:center 50%;">18.32</div>
<div class="t" style="left:1031.30px;top:1408.38px;font:normal 17px/17px 'Liberation Sans';color:#555;letter-spacing:0px;transform:scaleX(1.0600);transform-origin:center 50%;">6.08</div>
<div class="t" style="left:1102.33px;top:1408.38px;font:normal 17px/17px 'Liberation Sans';color:#555;letter-spacing:0px;transform:scaleX(1.0600);transform-origin:center 50%;">16.18</div>
<div class="t" style="left:1177.83px;top:1408.38px;font:normal 17px/17px 'Liberation Sans';color:#555;letter-spacing:0px;transform:scaleX(1.0600);transform-origin:center 50%;">12.38</div>
<div class="t" style="left:1258.30px;top:1408.38px;font:normal 17px/17px 'Liberation Sans';color:#555;letter-spacing:0px;transform:scaleX(1.0600);transform-origin:center 50%;">9.84</div>
<div class="t" style="left:1329.33px;top:1408.38px;font:normal 17px/17px 'Liberation Sans';color:#555;letter-spacing:0px;transform:scaleX(1.0600);transform-origin:center 50%;">15.45</div>
<div class="t" style="left:1409.73px;top:1408.38px;font:normal 17px/17px 'Liberation Sans';color:#555;letter-spacing:0px;transform:scaleX(1.0600);transform-origin:center 50%;">86.40</div>
<div class="t" style="left:1495.28px;top:1408.38px;font:normal 17px/17px 'Liberation Sans';color:#555;letter-spacing:0px;transform:scaleX(1.0600);transform-origin:center 50%;">61.37</div>
<div class="t" style="left:1576.43px;top:1408.38px;font:normal 17px/17px 'Liberation Sans';color:#555;letter-spacing:0px;transform:scaleX(1.0600);transform-origin:center 50%;">12.10</div>
<div class="t" style="left:1656.85px;top:1408.38px;font:normal 17px/17px 'Liberation Sans';color:#555;letter-spacing:0px;transform:scaleX(1.0600);transform-origin:center 50%;">4.10</div>
<div class="t" style="left:1727.05px;top:1408.38px;font:normal 17px/17px 'Liberation Sans';color:#555;letter-spacing:0px;transform:scaleX(1.0600);transform-origin:center 50%;">1.76</div>
<div class="t" style="left:1792.20px;top:1408.38px;font:normal 17px/17px 'Liberation Sans';color:#555;letter-spacing:0px;transform:scaleX(1.0600);transform-origin:center 50%;">0.87</div>
<div class="t" style="left:1858.65px;top:1408.38px;font:normal 17px/17px 'Liberation Sans';color:#555;letter-spacing:0px;transform:scaleX(1.0600);transform-origin:center 50%;">426.19</div>
<div class="t" style="left:1953.80px;top:1408.38px;font:normal 17px/17px 'Liberation Sans';color:#555;letter-spacing:0px;transform:scaleX(1.0600);transform-origin:center 50%;">0.00</div>
<div class="t" style="left:2035.30px;top:1408.38px;font:normal 17px/17px 'Liberation Sans';color:#555;letter-spacing:0px;transform:scaleX(1.0600);transform-origin:center 50%;">943.85</div>
<div class="t" style="left:65.07px;top:1450.93px;font:normal 17px/17px 'Liberation Sans';color:#555;letter-spacing:0px;transform:scaleX(1.0600);transform-origin:center 50%;">2025-07-08</div>
<div class="t" style="left:200.82px;top:1450.93px;font:normal 17px/17px 'Liberation Sans';color:#555;letter-spacing:0px;transform:scaleX(1.0600);transform-origin:center 50%;">0</div>
<div class="t" style="left:260.70px;top:1450.93px;font:normal 17px/17px 'Liberation Sans';color:#555;letter-spacing:0px;transform:scaleX(1.0600);transform-origin:center 50%;">195.46</div>
<div class="t" style="left:346.38px;top:1450.93px;font:normal 17px/17px 'Liberation Sans';color:#555;letter-spacing:0px;transform:scaleX(1.0600);transform-origin:center 50%;">30.73</div>
<div class="t" style="left:426.58px;top:1450.93px;font:normal 17px/17px 'Liberation Sans';color:#555;letter-spacing:0px;transform:scaleX(1.0600);transform-origin:center 50%;">54.00</div>
<div class="t" style="left:507.03px;top:1450.93px;font:normal 17px/17px 'Liberation Sans';color:#555;letter-spacing:0px;transform:scaleX(1.0600);transform-origin:center 50%;">21.59</div>
<div class="t" style="left:582.43px;top:1450.93px;font:normal 17px/17px 'Liberation Sans';color:#555;letter-spacing:0px;transform:scaleX(1.0600);transform-origin:center 50%;">28.22</div>
<div class="t" style="left:663.48px;top:1450.93px;font:normal 17px/17px 'Liberation Sans';color:#555;letter-spacing:0px;transform:scaleX(1.0600);transform-origin:center 50%;">68.28</div>
<div class="t" style="left:744.20px;top:1450.93px;font:normal 17px/17px 'Liberation Sans';color:#555;letter-spacing:0px;transform:scaleX(1.0600);transform-origin:center 50%;">2.66</div>
<div class="t" style="left:809.25px;top:1450.93px;font:normal 17px/17px 'Liberation Sans';color:#555;letter-spacing:0px;transform:scaleX(1.0600);transform-origin:center 50%;">2.52</div>
<div class="t" style="left:874.58px;top:1450.93px;font:normal 17px/17px 'Liberation Sans';color:#555;letter-spacing:0px;transform:scaleX(1.0600);transform-origin:center 50%;">13.04</div>
<div class="t" style="left:950.33px;top:1450.93px;font:normal 17px/17px 'Liberation Sans';color:#555;letter-spacing:0px;transform:scaleX(1.0600);transform-origin:center 50%;">26.61</div>
<div class="t" style="left:1031.30px;top:1450.93px;font:normal 17px/17px 'Liberation Sans';color:#555;letter-spacing:0px;transform:scaleX(1.0600);transform-origin:center 50%;">8.23</div>
<div class="t" style="left:1102.33px;top:1450.93px;font:normal 17px/17px 'Liberation Sans';color:#555;letter-spacing:0px;transform:scaleX(1.0600);transform-origin:center 50%;">27.01</div>
<div class="t" style="left:1177.83px;top:1450.93px;font:normal 17px/17px 'Liberation Sans';color:#555;letter-spacing:0px;transform:scaleX(1.0600);transform-origin:center 50%;">14.70</div>
<div class="t" style="left:1254.21px;top:1450.93px;font:normal 17px/17px 'Liberation Sans';color:#555;letter-spacing:0px;transform:scaleX(1.0600);transform-origin:center 50%;">11.44</div>
<div class="t" style="left:1329.33px;top:1450.93px;font:normal 17px/17px 'Liberation Sans';color:#555;letter-spacing:0px;transform:scaleX(1.0600);transform-origin:center 50%;">28.92</div>
<div class="t" style="left:1405.63px;top:1450.93px;font:normal 17px/17px 'Liberation Sans';color:#555;letter-spacing:0px;transform:scaleX(1.0600);transform-origin:center 50%;">116.79</div>
<div class="t" style="left:1495.28px;top:1450.93px;font:normal 17px/17px 'Liberation Sans';color:#555;letter-spacing:0px;transform:scaleX(1.0600);transform-origin:center 50%;">98.81</div>
<div class="t" style="left:1576.43px;top:1450.93px;font:normal 17px/17px 'Liberation Sans';color:#555;letter-spacing:0px;transform:scaleX(1.0600);transform-origin:center 50%;">17.62</div>
<div class="t" style="left:1656.85px;top:1450.93px;font:normal 17px/17px 'Liberation Sans';color:#555;letter-spacing:0px;transform:scaleX(1.0600);transform-origin:center 50%;">4.05</div>
<div class="t" style="left:1727.05px;top:1450.93px;font:normal 17px/17px 'Liberation Sans';color:#555;letter-spacing:0px;transform:scaleX(1.0600);transform-origin:center 50%;">2.37</div>
<div class="t" style="left:1792.20px;top:1450.93px;font:normal 17px/17px 'Liberation Sans';color:#555;letter-spacing:0px;transform:scaleX(1.0600);transform-origin:center 50%;">1.61</div>
<div class="t" style="left:1858.65px;top:1450.93px;font:normal 17px/17px 'Liberation Sans';color:#555;letter-spacing:0px;transform:scaleX(1.0600);transform-origin:center 50%;">605.01</div>
<div class="t" style="left:1953.80px;top:1450.93px;font:normal 17px/17px 'Liberation Sans';color:#555;letter-spacing:0px;transform:scaleX(1.0600);transform-origin:center 50%;">0.00</div>
<div class="t" style="left:2030.57px;top:1450.93px;font:normal 17px/17px 'Liberation Sans';color:#555;letter-spacing:0px;transform:scaleX(1.0600);transform-origin:center 50%;">1379.65</div>
<div class="t" style="left:65.07px;top:1493.48px;font:normal 17px/17px 'Liberation Sans';color:#555;letter-spacing:0px;transform:scaleX(1.0600);transform-origin:center 50%;">2025-07-09</div>
<div class="t" style="left:200.82px;top:1493.48px;font:normal 17px/17px 'Liberation Sans';color:#555;letter-spacing:0px;transform:scaleX(1.0600);transform-origin:center 50%;">0</div>
<div class="t" style="left:265.43px;top:1493.48px;font:normal 17px/17px 'Liberation Sans';color:#555;letter-spacing:0px;transform:scaleX(1.0600);transform-origin:center 50%;">61.74</div>
<div class="t" style="left:346.38px;top:1493.48px;font:normal 17px/17px 'Liberation Sans';color:#555;letter-spacing:0px;transform:scaleX(1.0600);transform-origin:center 50%;">13.44</div>
<div class="t" style="left:426.58px;top:1493.48px;font:normal 17px/17px 'Liberation Sans';color:#555;letter-spacing:0px;transform:scaleX(1.0600);transform-origin:center 50%;">15.24</div>
<div class="t" style="left:511.75px;top:1493.48px;font:normal 17px/17px 'Liberation Sans';color:#555;letter-spacing:0px;transform:scaleX(1.0600);transform-origin:center 50%;">5.83</div>
<div class="t" style="left:582.43px;top:1493.48px;font:normal 17px/17px 'Liberation Sans';color:#555;letter-spacing:0px;transform:scaleX(1.0600);transform-origin:center 50%;">10.74</div>
<div class="t" style="left:663.48px;top:1493.48px;font:normal 17px/17px 'Liberation Sans';color:#555;letter-spacing:0px;transform:scaleX(1.0600);transform-origin:center 50%;">19.13</div>
<div class="t" style="left:744.20px;top:1493.48px;font:normal 17px/17px 'Liberation Sans';color:#555;letter-spacing:0px;transform:scaleX(1.0600);transform-origin:center 50%;">0.00</div>
<div class="t" style="left:809.25px;top:1493.48px;font:normal 17px/17px 'Liberation Sans';color:#555;letter-spacing:0px;transform:scaleX(1.0600);transform-origin:center 50%;">0.00</div>
<div class="t" style="left:879.30px;top:1493.48px;font:normal 17px/17px 'Liberation Sans';color:#555;letter-spacing:0px;transform:scaleX(1.0600);transform-origin:center 50%;">2.04</div>
<div class="t" style="left:955.05px;top:1493.48px;font:normal 17px/17px 'Liberation Sans';color:#555;letter-spacing:0px;transform:scaleX(1.0600);transform-origin:center 50%;">8.69</div>
<div class="t" style="left:1031.30px;top:1493.48px;font:normal 17px/17px 'Liberation Sans';color:#555;letter-spacing:0px;transform:scaleX(1.0600);transform-origin:center 50%;">1.74</div>
<div class="t" style="left:1107.05px;top:1493.48px;font:normal 17px/17px 'Liberation Sans';color:#555;letter-spacing:0px;transform:scaleX(1.0600);transform-origin:center 50%;">8.29</div>
<div class="t" style="left:1182.55px;top:1493.48px;font:normal 17px/17px 'Liberation Sans';color:#555;letter-spacing:0px;transform:scaleX(1.0600);transform-origin:center 50%;">4.61</div>
<div class="t" style="left:1258.30px;top:1493.48px;font:normal 17px/17px 'Liberation Sans';color:#555;letter-spacing:0px;transform:scaleX(1.0600);transform-origin:center 50%;">0.00</div>
<div class="t" style="left:1334.05px;top:1493.48px;font:normal 17px/17px 'Liberation Sans';color:#555;letter-spacing:0px;transform:scaleX(1.0600);transform-origin:center 50%;">0.00</div>
<div class="t" style="left:1409.73px;top:1493.48px;font:normal 17px/17px 'Liberation Sans';color:#555;letter-spacing:0px;transform:scaleX(1.0600);transform-origin:center 50%;">30.66</div>
<div class="t" style="left:1495.28px;top:1493.48px;font:normal 17px/17px 'Liberation Sans';color:#555;letter-spacing:0px;transform:scaleX(1.0600);transform-origin:center 50%;">37.39</div>
<div class="t" style="left:1581.15px;top:1493.48px;font:normal 17px/17px 'Liberation Sans';color:#555;letter-spacing:0px;transform:scaleX(1.0600);transform-origin:center 50%;">4.40</div>
<div class="t" style="left:1656.85px;top:1493.48px;font:normal 17px/17px 'Liberation Sans';color:#555;letter-spacing:0px;transform:scaleX(1.0600);transform-origin:center 50%;">0.00</div>
<div class="t" style="left:1727.05px;top:1493.48px;font:normal 17px/17px 'Liberation Sans';color:#555;letter-spacing:0px;transform:scaleX(1.0600);transform-origin:center 50%;">0.00</div>
<div class="t" style="left:1792.20px;top:1493.48px;font:normal 17px/17px 'Liberation Sans';color:#555;letter-spacing:0px;transform:scaleX(1.0600);transform-origin:center 50%;">0.44</div>
<div class="t" style="left:1858.65px;top:1493.48px;font:normal 17px/17px 'Liberation Sans';color:#555;letter-spacing:0px;transform:scaleX(1.0600);transform-origin:center 50%;">150.43</div>
<div class="t" style="left:1953.80px;top:1493.48px;font:normal 17px/17px 'Liberation Sans';color:#555;letter-spacing:0px;transform:scaleX(1.0600);transform-origin:center 50%;">0.00</div>
<div class="t" style="left:2035.30px;top:1493.48px;font:normal 17px/17px 'Liberation Sans';color:#555;letter-spacing:0px;transform:scaleX(1.0600);transform-origin:center 50%;">374.85</div>
<div class="t" style="left:65.07px;top:1536.03px;font:normal 17px/17px 'Liberation Sans';color:#555;letter-spacing:0px;transform:scaleX(1.0600);transform-origin:center 50%;">2025-07-10</div>
<div class="t" style="left:200.82px;top:1536.03px;font:normal 17px/17px 'Liberation Sans';color:#555;letter-spacing:0px;transform:scaleX(1.0600);transform-origin:center 50%;">0</div>
<div class="t" style="left:260.70px;top:1536.03px;font:normal 17px/17px 'Liberation Sans';color:#555;letter-spacing:0px;transform:scaleX(1.0600);transform-origin:center 50%;">101.86</div>
<div class="t" style="left:346.38px;top:1536.03px;font:normal 17px/17px 'Liberation Sans';color:#555;letter-spacing:0px;transform:scaleX(1.0600);transform-origin:center 50%;">19.46</div>
<div class="t" style="left:426.58px;top:1536.03px;font:normal 17px/17px 'Liberation Sans';color:#555;letter-spacing:0px;transform:scaleX(1.0600);transform-origin:center 50%;">42.05</div>
<div class="t" style="left:507.03px;top:1536.03px;font:normal 17px/17px 'Liberation Sans';color:#555;letter-spacing:0px;transform:scaleX(1.0600);transform-origin:center 50%;">15.65</div>
<div class="t" style="left:582.43px;top:1536.03px;font:normal 17px/17px 'Liberation Sans';color:#555;letter-spacing:0px;transform:scaleX(1.0600);transform-origin:center 50%;">18.24</div>
<div class="t" style="left:663.48px;top:1536.03px;font:normal 17px/17px 'Liberation Sans';color:#555;letter-spacing:0px;transform:scaleX(1.0600);transform-origin:center 50%;">50.22</div>
<div class="t" style="left:744.20px;top:1536.03px;font:normal 17px/17px 'Liberation Sans';color:#555;letter-spacing:0px;transform:scaleX(1.0600);transform-origin:center 50%;">2.85</div>
<div class="t" style="left:809.89px;top:1536.03px;font:normal 17px/17px 'Liberation Sans';color:#555;letter-spacing:0px;transform:scaleX(1.0600);transform-origin:center 50%;">2.11</div>
<div class="t" style="left:879.30px;top:1536.03px;font:normal 17px/17px 'Liberation Sans';color:#555;letter-spacing:0px;transform:scaleX(1.0600);transform-origin:center 50%;">7.33</div>
<div class="t" style="left:950.33px;top:1536.03px;font:normal 17px/17px 'Liberation Sans';color:#555;letter-spacing:0px;transform:scaleX(1.0600);transform-origin:center 50%;">16.52</div>
<div class="t" style="left:1031.30px;top:1536.03px;font:normal 17px/17px 'Liberation Sans';color:#555;letter-spacing:0px;transform:scaleX(1.0600);transform-origin:center 50%;">7.72</div>
<div class="t" style="left:1102.33px;top:1536.03px;font:normal 17px/17px 'Liberation Sans';color:#555;letter-spacing:0px;transform:scaleX(1.0600);transform-origin:center 50%;">14.30</div>
<div class="t" style="left:1182.55px;top:1536.03px;font:normal 17px/17px 'Liberation Sans';color:#555;letter-spacing:0px;transform:scaleX(1.0600);transform-origin:center 50%;">7.16</div>
<div class="t" style="left:1258.30px;top:1536.03px;font:normal 17px/17px 'Liberation Sans';color:#555;letter-spacing:0px;transform:scaleX(1.0600);transform-origin:center 50%;">8.76</div>
<div class="t" style="left:1329.33px;top:1536.03px;font:normal 17px/17px 'Liberation Sans';color:#555;letter-spacing:0px;transform:scaleX(1.0600);transform-origin:center 50%;">25.36</div>
<div class="t" style="left:1409.73px;top:1536.03px;font:normal 17px/17px 'Liberation Sans';color:#555;letter-spacing:0px;transform:scaleX(1.0600);transform-origin:center 50%;">83.71</div>
<div class="t" style="left:1495.28px;top:1536.03px;font:normal 17px/17px 'Liberation Sans';color:#555;letter-spacing:0px;transform:scaleX(1.0600);transform-origin:center 50%;">61.28</div>
<div class="t" style="left:1577.06px;top:1536.03px;font:normal 17px/17px 'Liberation Sans';color:#555;letter-spacing:0px;transform:scaleX(1.0600);transform-origin:center 50%;">11.36</div>
<div class="t" style="left:1656.85px;top:1536.03px;font:normal 17px/17px 'Liberation Sans';color:#555;letter-spacing:0px;transform:scaleX(1.0600);transform-origin:center 50%;">6.69</div>
<div class="t" style="left:1727.05px;top:1536.03px;font:normal 17px/17px 'Liberation Sans';color:#555;letter-spacing:0px;transform:scaleX(1.0600);transform-origin:center 50%;">1.39</div>
<div class="t" style="left:1792.20px;top:1536.03px;font:normal 17px/17px 'Liberation Sans';color:#555;letter-spacing:0px;transform:scaleX(1.0600);transform-origin:center 50%;">0.27</div>
<div class="t" style="left:1858.65px;top:1536.03px;font:normal 17px/17px 'Liberation Sans';color:#555;letter-spacing:0px;transform:scaleX(1.0600);transform-origin:center 50%;">358.02</div>
<div class="t" style="left:1949.08px;top:1536.03px;font:normal 17px/17px 'Liberation Sans';color:#555;letter-spacing:0px;transform:scaleX(1.0600);transform-origin:center 50%;">85.51</div>
<div class="t" style="left:2035.30px;top:1536.03px;font:normal 17px/17px 'Liberation Sans';color:#555;letter-spacing:0px;transform:scaleX(1.0600);transform-origin:center 50%;">947.85</div>
<div class="t" style="left:65.70px;top:1578.58px;font:normal 17px/17px 'Liberation Sans';color:#555;letter-spacing:0px;transform:scaleX(1.0600);transform-origin:center 50%;">2025-07-11</div>
<div class="t" style="left:200.82px;top:1578.58px;font:normal 17px/17px 'Liberation Sans';color:#555;letter-spacing:0px;transform:scaleX(1.0600);transform-origin:center 50%;">0</div>
<div class="t" style="left:260.70px;top:1578.58px;font:normal 17px/17px 'Liberation Sans';color:#555;letter-spacing:0px;transform:scaleX(1.0600);transform-origin:center 50%;">213.28</div>
<div class="t" style="left:346.38px;top:1578.58px;font:normal 17px/17px 'Liberation Sans';color:#555;letter-spacing:0px;transform:scaleX(1.0600);transform-origin:center 50%;">31.09</div>
<div class="t" style="left:426.58px;top:1578.58px;font:normal 17px/17px 'Liberation Sans';color:#555;letter-spacing:0px;transform:scaleX(1.0600);transform-origin:center 50%;">54.81</div>
<div class="t" style="left:507.03px;top:1578.58px;font:normal 17px/17px 'Liberation Sans';color:#555;letter-spacing:0px;transform:scaleX(1.0600);transform-origin:center 50%;">21.14</div>
<div class="t" style="left:582.43px;top:1578.58px;font:normal 17px/17px 'Liberation Sans';color:#555;letter-spacing:0px;transform:scaleX(1.0600);transform-origin:center 50%;">29.31</div>
<div class="t" style="left:663.48px;top:1578.58px;font:normal 17px/17px 'Liberation Sans';color:#555;letter-spacing:0px;transform:scaleX(1.0600);transform-origin:center 50%;">71.61</div>
<div class="t" style="left:744.20px;top:1578.58px;font:normal 17px/17px 'Liberation Sans';color:#555;letter-spacing:0px;transform:scaleX(1.0600);transform-origin:center 50%;">1.52</div>
<div class="t" style="left:809.25px;top:1578.58px;font:normal 17px/17px 'Liberation Sans';color:#555;letter-spacing:0px;transform:scaleX(1.0600);transform-origin:center 50%;">3.35</div>
<div class="t" style="left:874.58px;top:1578.58px;font:normal 17px/17px 'Liberation Sans';color:#555;letter-spacing:0px;transform:scaleX(1.0600);transform-origin:center 50%;">10.00</div>
<div class="t" style="left:950.33px;top:1578.58px;font:normal 17px/17px 'Liberation Sans';color:#555;letter-spacing:0px;transform:scaleX(1.0600);transform-origin:center 50%;">15.52</div>
<div class="t" style="left:1031.30px;top:1578.58px;font:normal 17px/17px 'Liberation Sans';color:#555;letter-spacing:0px;transform:scaleX(1.0600);transform-origin:center 50%;">9.68</div>
<div class="t" style="left:1102.33px;top:1578.58px;font:normal 17px/17px 'Liberation Sans';color:#555;letter-spacing:0px;transform:scaleX(1.0600);transform-origin:center 50%;">15.27</div>
<div class="t" style="left:1177.83px;top:1578.58px;font:normal 17px/17px 'Liberation Sans';color:#555;letter-spacing:0px;transform:scaleX(1.0600);transform-origin:center 50%;">12.91</div>
<div class="t" style="left:1258.30px;top:1578.58px;font:normal 17px/17px 'Liberation Sans';color:#555;letter-spacing:0px;transform:scaleX(1.0600);transform-origin:center 50%;">7.77</div>
<div class="t" style="left:1329.33px;top:1578.58px;font:normal 17px/17px 'Liberation Sans';color:#555;letter-spacing:0px;transform:scaleX(1.0600);transform-origin:center 50%;">29.08</div>
<div class="t" style="left:1405.63px;top:1578.58px;font:normal 17px/17px 'Liberation Sans';color:#555;letter-spacing:0px;transform:scaleX(1.0600);transform-origin:center 50%;">114.52</div>
<div class="t" style="left:1495.28px;top:1578.58px;font:normal 17px/17px 'Liberation Sans';color:#555;letter-spacing:0px;transform:scaleX(1.0600);transform-origin:center 50%;">99.22</div>
<div class="t" style="left:1576.43px;top:1578.58px;font:normal 17px/17px 'Liberation Sans';color:#555;letter-spacing:0px;transform:scaleX(1.0600);transform-origin:center 50%;">15.83</div>
<div class="t" style="left:1656.85px;top:1578.58px;font:normal 17px/17px 'Liberation Sans';color:#555;letter-spacing:0px;transform:scaleX(1.0600);transform-origin:center 50%;">5.95</div>
<div class="t" style="left:1727.05px;top:1578.58px;font:normal 17px/17px 'Liberation Sans';color:#555;letter-spacing:0px;transform:scaleX(1.0600);transform-origin:center 50%;">2.14</div>
<div class="t" style="left:1792.20px;top:1578.58px;font:normal 17px/17px 'Liberation Sans';color:#555;letter-spacing:0px;transform:scaleX(1.0600);transform-origin:center 50%;">0.81</div>
<div class="t" style="left:1858.65px;top:1578.58px;font:normal 17px/17px 'Liberation Sans';color:#555;letter-spacing:0px;transform:scaleX(1.0600);transform-origin:center 50%;">482.75</div>
<div class="t" style="left:1944.35px;top:1578.58px;font:normal 17px/17px 'Liberation Sans';color:#555;letter-spacing:0px;transform:scaleX(1.0600);transform-origin:center 50%;">151.79</div>
<div class="t" style="left:2030.57px;top:1578.58px;font:normal 17px/17px 'Liberation Sans';color:#555;letter-spacing:0px;transform:scaleX(1.0600);transform-origin:center 50%;">1399.35</div>
<div class="t" style="left:81.00px;top:1618.53px;font:bold 17px/17px 'Liberation Sans';color:#1a1a1a;letter-spacing:0px;transform:scaleX(1.0800);transform-origin:center 50%;">TOTAL</div>
<div class="t" style="left:179.55px;top:1618.53px;font:bold 17px/17px 'Liberation Sans';color:#1a1a1a;letter-spacing:0px;transform:scaleX(1.0400);transform-origin:center 50%;">370.02</div>
<div class="t" style="left:255.97px;top:1618.53px;font:bold 17px/17px 'Liberation Sans';color:#1a1a1a;letter-spacing:0px;transform:scaleX(1.0400);transform-origin:center 50%;">4779.32</div>
<div class="t" style="left:341.65px;top:1618.53px;font:bold 17px/17px 'Liberation Sans';color:#1a1a1a;letter-spacing:0px;transform:scaleX(1.0400);transform-origin:center 50%;">771.96</div>
<div class="t" style="left:417.12px;top:1618.53px;font:bold 17px/17px 'Liberation Sans';color:#1a1a1a;letter-spacing:0px;transform:scaleX(1.0400);transform-origin:center 50%;">1327.71</div>
<div class="t" style="left:502.30px;top:1618.53px;font:bold 17px/17px 'Liberation Sans';color:#1a1a1a;letter-spacing:0px;transform:scaleX(1.0400);transform-origin:center 50%;">494.96</div>
<div class="t" style="left:577.70px;top:1618.53px;font:bold 17px/17px 'Liberation Sans';color:#1a1a1a;letter-spacing:0px;transform:scaleX(1.0400);transform-origin:center 50%;">834.03</div>
<div class="t" style="left:654.02px;top:1618.53px;font:bold 17px/17px 'Liberation Sans';color:#1a1a1a;letter-spacing:0px;transform:scaleX(1.0400);transform-origin:center 50%;">1633.37</div>
<div class="t" style="left:739.48px;top:1618.53px;font:bold 17px/17px 'Liberation Sans';color:#1a1a1a;letter-spacing:0px;transform:scaleX(1.0400);transform-origin:center 50%;">54.69</div>
<div class="t" style="left:804.53px;top:1618.53px;font:bold 17px/17px 'Liberation Sans';color:#1a1a1a;letter-spacing:0px;transform:scaleX(1.0400);transform-origin:center 50%;">87.24</div>
<div class="t" style="left:869.85px;top:1618.53px;font:bold 17px/17px 'Liberation Sans';color:#1a1a1a;letter-spacing:0px;transform:scaleX(1.0400);transform-origin:center 50%;">228.04</div>
<div class="t" style="left:945.60px;top:1618.53px;font:bold 17px/17px 'Liberation Sans';color:#1a1a1a;letter-spacing:0px;transform:scaleX(1.0400);transform-origin:center 50%;">487.69</div>
<div class="t" style="left:1021.85px;top:1618.53px;font:bold 17px/17px 'Liberation Sans';color:#1a1a1a;letter-spacing:0px;transform:scaleX(1.0400);transform-origin:center 50%;">193.97</div>
<div class="t" style="left:1097.60px;top:1618.53px;font:bold 17px/17px 'Liberation Sans';color:#1a1a1a;letter-spacing:0px;transform:scaleX(1.0400);transform-origin:center 50%;">573.58</div>
<div class="t" style="left:1173.10px;top:1618.53px;font:bold 17px/17px 'Liberation Sans';color:#1a1a1a;letter-spacing:0px;transform:scaleX(1.0400);transform-origin:center 50%;">379.67</div>
<div class="t" style="left:1248.85px;top:1618.53px;font:bold 17px/17px 'Liberation Sans';color:#1a1a1a;letter-spacing:0px;transform:scaleX(1.0400);transform-origin:center 50%;">188.57</div>
<div class="t" style="left:1324.60px;top:1618.53px;font:bold 17px/17px 'Liberation Sans';color:#1a1a1a;letter-spacing:0px;transform:scaleX(1.0400);transform-origin:center 50%;">596.49</div>
<div class="t" style="left:1400.27px;top:1618.53px;font:bold 17px/17px 'Liberation Sans';color:#1a1a1a;letter-spacing:0px;transform:scaleX(1.0400);transform-origin:center 50%;">2594.12</div>
<div class="t" style="left:1485.82px;top:1618.53px;font:bold 17px/17px 'Liberation Sans';color:#1a1a1a;letter-spacing:0px;transform:scaleX(1.0400);transform-origin:center 50%;">2299.73</div>
<div class="t" style="left:1571.70px;top:1618.53px;font:bold 17px/17px 'Liberation Sans';color:#1a1a1a;letter-spacing:0px;transform:scaleX(1.0400);transform-origin:center 50%;">378.15</div>
<div class="t" style="left:1647.40px;top:1618.53px;font:bold 17px/17px 'Liberation Sans';color:#1a1a1a;letter-spacing:0px;transform:scaleX(1.0400);transform-origin:center 50%;">129.69</div>
<div class="t" style="left:1722.33px;top:1618.53px;font:bold 17px/17px 'Liberation Sans';color:#1a1a1a;letter-spacing:0px;transform:scaleX(1.0400);transform-origin:center 50%;">39.03</div>
<div class="t" style="left:1787.48px;top:1618.53px;font:bold 17px/17px 'Liberation Sans';color:#1a1a1a;letter-spacing:0px;transform:scaleX(1.0400);transform-origin:center 50%;">53.65</div>
<div class="t" style="left:1853.92px;top:1618.53px;font:bold 17px/17px 'Liberation Sans';color:#1a1a1a;letter-spacing:0px;transform:scaleX(1.0400);transform-origin:center 50%;">10712.1</div>
<div class="t" style="left:1939.62px;top:1618.53px;font:bold 17px/17px 'Liberation Sans';color:#1a1a1a;letter-spacing:0px;transform:scaleX(1.0400);transform-origin:center 50%;">3503.14</div>
<div class="t" style="left:2025.85px;top:1618.53px;font:bold 17px/17px 'Liberation Sans';color:#1a1a1a;letter-spacing:0px;transform:scaleX(1.0400);transform-origin:center 50%;">32710.52</div>
<div class="t" style="left:1044.87px;top:1670.18px;font:normal 15.5px/15.5px 'Liberation Sans';color:#fff;letter-spacing:0px;transform:scaleX(1.0512);transform-origin:center 50%;-webkit-text-stroke:0.4px #fff;">DOWNLOAD CSV</div>
<div class="t" style="left:1235.20px;top:1670.18px;font:normal 15.5px/15.5px 'Liberation Sans';color:#fff;letter-spacing:0px;transform:scaleX(1.0506);transform-origin:center 50%;-webkit-text-stroke:0.4px #fff;">DOWNLOAD PDF</div>
<div class="t" style="left:90.57px;top:1068.20px;width:35.97px;font:bold 16.6px/16.6px 'Liberation Sans';color:#444;transform:rotate(-90deg) scaleY(1.1);transform-origin:50% 50%;">Date</div>
<div class="t" style="left:176.50px;top:1068.20px;width:58.11px;font:bold 16.6px/16.6px 'Liberation Sans';color:#444;transform:rotate(-90deg) scaleY(1.1);transform-origin:50% 50%;">SM - 01</div>
<div class="t" style="left:239.22px;top:1068.20px;width:94.95px;font:bold 16.6px/16.6px 'Liberation Sans';color:#444;transform:rotate(-90deg) scaleY(1.1);transform-origin:50% 50%;">LASER CUT</div>
<div class="t" style="left:323.38px;top:1068.20px;width:88.55px;font:bold 16.6px/16.6px 'Liberation Sans';color:#444;transform:rotate(-90deg) scaleY(1.1);transform-origin:50% 50%;">TPP-AE255</div>
<div class="t" style="left:398.97px;top:1068.20px;width:97.77px;font:bold 16.6px/16.6px 'Liberation Sans';color:#444;transform:rotate(-90deg) scaleY(1.1);transform-origin:50% 50%;">TPP-AE2510</div>
<div class="t" style="left:495.10px;top:1068.20px;width:66.41px;font:bold 16.6px/16.6px 'Liberation Sans';color:#444;transform:rotate(-90deg) scaleY(1.1);transform-origin:50% 50%;">PB - 35T</div>
<div class="t" style="left:565.89px;top:1068.20px;width:75.62px;font:bold 16.6px/16.6px 'Liberation Sans';color:#444;transform:rotate(-90deg) scaleY(1.1);transform-origin:50% 50%;">PB - 100T</div>
<div class="t" style="left:646.94px;top:1068.20px;width:75.62px;font:bold 16.6px/16.6px 'Liberation Sans';color:#444;transform:rotate(-90deg) scaleY(1.1);transform-origin:50% 50%;">PB - 150T</div>
<div class="t" style="left:728.16px;top:1068.20px;width:65.19px;font:bold 16.6px/16.6px 'Liberation Sans';color:#444;transform:rotate(-90deg) scaleY(1.1);transform-origin:50% 50%;">PP - 16T</div>
<div class="t" style="left:793.21px;top:1068.20px;width:65.19px;font:bold 16.6px/16.6px 'Liberation Sans';color:#444;transform:rotate(-90deg) scaleY(1.1);transform-origin:50% 50%;">PP - 35T</div>
<div class="t" style="left:863.26px;top:1068.20px;width:65.19px;font:bold 16.6px/16.6px 'Liberation Sans';color:#444;transform:rotate(-90deg) scaleY(1.1);transform-origin:50% 50%;">PP - 80T</div>
<div class="t" style="left:934.40px;top:1068.20px;width:74.41px;font:bold 16.6px/16.6px 'Liberation Sans';color:#444;transform:rotate(-90deg) scaleY(1.1);transform-origin:50% 50%;">PP - 160T</div>
<div class="t" style="left:1025.26px;top:1068.20px;width:45.19px;font:bold 16.6px/16.6px 'Liberation Sans';color:#444;transform:rotate(-90deg) scaleY(1.1);transform-origin:50% 50%;">SPOT</div>
<div class="t" style="left:1091.33px;top:1068.20px;width:64.55px;font:bold 16.6px/16.6px 'Liberation Sans';color:#444;transform:rotate(-90deg) scaleY(1.1);transform-origin:50% 50%;">MIG - 01</div>
<div class="t" style="left:1166.83px;top:1068.20px;width:64.55px;font:bold 16.6px/16.6px 'Liberation Sans';color:#444;transform:rotate(-90deg) scaleY(1.1);transform-origin:50% 50%;">MIG - 02</div>
<div class="t" style="left:1242.58px;top:1068.20px;width:64.55px;font:bold 16.6px/16.6px 'Liberation Sans';color:#444;transform:rotate(-90deg) scaleY(1.1);transform-origin:50% 50%;">MIG - 03</div>
<div class="t" style="left:1318.33px;top:1068.20px;width:64.55px;font:bold 16.6px/16.6px 'Liberation Sans';color:#444;transform:rotate(-90deg) scaleY(1.1);transform-origin:50% 50%;">MIG - 04</div>
<div class="t" style="left:1381.22px;top:1068.20px;width:99.56px;font:bold 16.6px/16.6px 'Liberation Sans';color:#444;transform:rotate(-90deg) scaleY(1.1);transform-origin:50% 50%;">PB-YELLOW</div>
<div class="t" style="left:1479.67px;top:1068.20px;width:73.75px;font:bold 16.6px/16.6px 'Liberation Sans';color:#444;transform:rotate(-90deg) scaleY(1.1);transform-origin:50% 50%;">PB-BLUE</div>
<div class="t" style="left:1574.18px;top:1068.20px;width:47.03px;font:bold 16.6px/16.6px 'Liberation Sans';color:#444;transform:rotate(-90deg) scaleY(1.1);transform-origin:50% 50%;">OVEN</div>
<div class="t" style="left:1640.21px;top:1068.20px;width:66.38px;font:bold 16.6px/16.6px 'Liberation Sans';color:#444;transform:rotate(-90deg) scaleY(1.1);transform-origin:50% 50%;">KITTING</div>
<div class="t" style="left:1713.17px;top:1068.20px;width:60.86px;font:bold 16.6px/16.6px 'Liberation Sans';color:#444;transform:rotate(-90deg) scaleY(1.1);transform-origin:50% 50%;">WC - 01</div>
<div class="t" style="left:1769.57px;top:1068.20px;width:78.36px;font:bold 16.6px/16.6px 'Liberation Sans';color:#444;transform:rotate(-90deg) scaleY(1.1);transform-origin:50% 50%;">DRILLING</div>
<div class="t" style="left:1843.16px;top:1068.20px;width:82.98px;font:bold 16.6px/16.6px 'Liberation Sans';color:#444;transform:rotate(-90deg) scaleY(1.1);transform-origin:50% 50%;">Comp-Ac1</div>
<div class="t" style="left:1928.86px;top:1068.20px;width:82.98px;font:bold 16.6px/16.6px 'Liberation Sans';color:#444;transform:rotate(-90deg) scaleY(1.1);transform-origin:50% 50%;">Comp-Ac2</div>
<div class="t" style="left:2042.10px;top:1068.20px;width:38.41px;font:bold 16.6px/16.6px 'Liberation Sans';color:#444;transform:rotate(-90deg) scaleY(1.1);transform-origin:50% 50%;">Total</div>
</div>
</div>
<div style="position:absolute;left:29.00px;top:1731.50px;width:2079.00px;height:2.50px;background:#ececec;"></div>
<svg width="2131" height="800" viewBox="0 0 2131 800">
<ellipse cx="114" cy="180" rx="13.6" ry="11.8" fill="none" stroke="#000" stroke-width="2.7"/>
<ellipse cx="113.5" cy="180" rx="7" ry="6.8" fill="#000"/>
<ellipse cx="227.7" cy="180" rx="13.6" ry="11.8" fill="none" stroke="#707070" stroke-width="2.3"/>
<g fill="#222"><rect x="808.3" y="172.4" width="16.8" height="14.1" rx="1" fill="none" stroke="#222" stroke-width="2.2"/><rect x="808.2" y="172" width="17" height="4.4"/><rect x="810.6" y="169" width="2.3" height="4"/><rect x="820.3" y="169" width="2.3" height="4"/></g>
<g fill="#222"><rect x="1213.9" y="172.4" width="16.8" height="14.1" rx="1" fill="none" stroke="#222" stroke-width="2.2"/><rect x="1213.8" y="172" width="17" height="4.4"/><rect x="1216.2" y="169" width="2.3" height="4"/><rect x="1225.9" y="169" width="2.3" height="4"/></g>
<path d="M1630.5 176 L1645.9 176 L1638.2 183.8 Z" fill="#6b6b6b"/>
<path d="M614.30 513.65 A218.85 160.05 0 0 1 465.14 665.37 L465.14 705.37 A218.85 160.05 0 0 0 614.30 553.65 Z" fill="#2a53a6" stroke="#2a53a6" stroke-width="0.6"/>
<path d="M465.14 665.37 A218.85 160.05 0 0 1 219.62 608.95 L219.62 648.95 A218.85 160.05 0 0 0 465.14 705.37 Z" fill="#b02d0f" stroke="#b02d0f" stroke-width="0.6"/>
<path d="M219.62 608.95 A218.85 160.05 0 0 1 176.60 513.65 L176.60 553.65 A218.85 160.05 0 0 0 219.62 648.95 Z" fill="#c97a05" stroke="#c97a05" stroke-width="0.6"/>
<path d="M395.45 513.65 L395.45 353.60 A218.85 160.05 0 0 1 465.14 665.37 Z" fill="#3366cc" stroke="#3366cc" stroke-width="0.7" stroke-linejoin="round"/>
<path d="M395.45 513.65 L465.14 665.37 A218.85 160.05 0 0 1 219.62 608.95 Z" fill="#dc3912" stroke="#dc3912" stroke-width="0.7" stroke-linejoin="round"/>
<path d="M395.45 513.65 L219.62 608.95 A218.85 160.05 0 0 1 185.34 468.87 Z" fill="#ff9900" stroke="#ff9900" stroke-width="0.7" stroke-linejoin="round"/>
<path d="M395.45 513.65 L185.34 468.87 A218.85 160.05 0 0 1 271.00 382.00 Z" fill="#109618" stroke="#109618" stroke-width="0.7" stroke-linejoin="round"/>
<path d="M395.45 513.65 L271.00 382.00 A218.85 160.05 0 0 1 395.45 353.60 Z" fill="#990099" stroke="#990099" stroke-width="0.7" stroke-linejoin="round"/>
<ellipse cx="729.6" cy="342.2" rx="8.4" ry="7.9" fill="#3366cc"/>
<ellipse cx="729.6" cy="368.4" rx="8.4" ry="7.9" fill="#dc3912"/>
<ellipse cx="729.6" cy="394.5" rx="8.4" ry="7.9" fill="#ff9900"/>
<ellipse cx="729.6" cy="420.5" rx="8.4" ry="7.9" fill="#109618"/>
<ellipse cx="729.6" cy="446.6" rx="8.4" ry="7.9" fill="#990099"/>
<line x1="1214.7" y1="340.60" x2="2068.0" y2="340.60" stroke="#d9d9d9" stroke-width="1.3" stroke-dasharray="4 4"/>
<line x1="1214.7" y1="513.80" x2="2068.0" y2="513.80" stroke="#d9d9d9" stroke-width="1.3" stroke-dasharray="4 4"/>
<line x1="1214.7" y1="603.65" x2="2068.0" y2="603.65" stroke="#d9d9d9" stroke-width="1.3" stroke-dasharray="4 4"/>
<line x1="1257.37" y1="340.6" x2="1257.37" y2="693.5" stroke="#d9d9d9" stroke-width="1.3" stroke-dasharray="4 4"/>
<line x1="1314.25" y1="340.6" x2="1314.25" y2="693.5" stroke="#d9d9d9" stroke-width="1.3" stroke-dasharray="4 4"/>
<line x1="1371.14" y1="340.6" x2="1371.14" y2="693.5" stroke="#d9d9d9" stroke-width="1.3" stroke-dasharray="4 4"/>
<line x1="1428.03" y1="340.6" x2="1428.03" y2="693.5" stroke="#d9d9d9" stroke-width="1.3" stroke-dasharray="4 4"/>
<line x1="1484.91" y1="340.6" x2="1484.91" y2="693.5" stroke="#d9d9d9" stroke-width="1.3" stroke-dasharray="4 4"/>
<line x1="1541.80" y1="340.6" x2="1541.80" y2="693.5" stroke="#d9d9d9" stroke-width="1.3" stroke-dasharray="4 4"/>
<line x1="1598.68" y1="340.6" x2="1598.68" y2="693.5" stroke="#d9d9d9" stroke-width="1.3" stroke-dasharray="4 4"/>
<line x1="1655.57" y1="340.6" x2="1655.57" y2="693.5" stroke="#d9d9d9" stroke-width="1.3" stroke-dasharray="4 4"/>
<line x1="1712.46" y1="340.6" x2="1712.46" y2="693.5" stroke="#d9d9d9" stroke-width="1.3" stroke-dasharray="4 4"/>
<line x1="1769.35" y1="340.6" x2="1769.35" y2="693.5" stroke="#d9d9d9" stroke-width="1.3" stroke-dasharray="4 4"/>
<line x1="1826.23" y1="340.6" x2="1826.23" y2="693.5" stroke="#d9d9d9" stroke-width="1.3" stroke-dasharray="4 4"/>
<line x1="1883.12" y1="340.6" x2="1883.12" y2="693.5" stroke="#d9d9d9" stroke-width="1.3" stroke-dasharray="4 4"/>
<line x1="1940.01" y1="340.6" x2="1940.01" y2="693.5" stroke="#d9d9d9" stroke-width="1.3" stroke-dasharray="4 4"/>
<line x1="1996.89" y1="340.6" x2="1996.89" y2="693.5" stroke="#d9d9d9" stroke-width="1.3" stroke-dasharray="4 4"/>
<line x1="2053.78" y1="340.6" x2="2053.78" y2="693.5" stroke="#d9d9d9" stroke-width="1.3" stroke-dasharray="4 4"/>
<line x1="2068.0" y1="340.6" x2="2068.0" y2="693.5" stroke="#d9d9d9" stroke-width="1.3" stroke-dasharray="4 4"/>
<rect x="1217.70" y="661.80" width="22.3" height="31.70" fill="#8884d8"/>
<rect x="1246.14" y="504.40" width="22.3" height="189.10" fill="#8884d8"/>
<rect x="1274.59" y="475.90" width="22.3" height="217.60" fill="#8884d8"/>
<rect x="1303.03" y="613.50" width="22.3" height="80.00" fill="#8884d8"/>
<rect x="1331.47" y="380.30" width="22.3" height="313.20" fill="#8884d8"/>
<rect x="1359.92" y="386.20" width="22.3" height="307.30" fill="#8884d8"/>
<rect x="1388.36" y="395.90" width="22.3" height="297.60" fill="#8884d8"/>
<rect x="1416.80" y="386.80" width="22.3" height="306.70" fill="#8884d8"/>
<rect x="1445.25" y="363.50" width="22.3" height="330.00" fill="#8884d8"/>
<rect x="1473.69" y="455.30" width="22.3" height="238.20" fill="#8884d8"/>
<rect x="1502.13" y="615.60" width="22.3" height="77.90" fill="#8884d8"/>
<rect x="1530.58" y="372.10" width="22.3" height="321.40" fill="#8884d8"/>
<rect x="1559.02" y="381.20" width="22.3" height="312.30" fill="#8884d8"/>
<rect x="1587.46" y="377.20" width="22.3" height="316.30" fill="#8884d8"/>
<rect x="1615.91" y="374.40" width="22.3" height="319.10" fill="#8884d8"/>
<rect x="1644.35" y="375.70" width="22.3" height="317.80" fill="#8884d8"/>
<rect x="1672.79" y="439.90" width="22.3" height="253.60" fill="#8884d8"/>
<rect x="1701.24" y="605.10" width="22.3" height="88.40" fill="#8884d8"/>
<rect x="1729.68" y="365.10" width="22.3" height="328.40" fill="#8884d8"/>
<rect x="1758.12" y="379.17" width="22.3" height="314.33" fill="#8884d8"/>
<rect x="1786.57" y="480.59" width="22.3" height="212.91" fill="#8884d8"/>
<rect x="1815.01" y="609.30" width="22.3" height="84.20" fill="#8884d8"/>
<rect x="1843.45" y="383.60" width="22.3" height="309.90" fill="#8884d8"/>
<rect x="1871.90" y="481.49" width="22.3" height="212.01" fill="#8884d8"/>
<rect x="1900.34" y="604.94" width="22.3" height="88.56" fill="#8884d8"/>
<rect x="1928.78" y="379.42" width="22.3" height="314.08" fill="#8884d8"/>
<rect x="1957.23" y="387.26" width="22.3" height="306.24" fill="#8884d8"/>
<rect x="1985.67" y="400.35" width="22.3" height="293.15" fill="#8884d8"/>
<rect x="2014.11" y="407.20" width="22.3" height="286.30" fill="#8884d8"/>
<rect x="2042.56" y="425.06" width="22.3" height="268.44" fill="#8884d8"/>
<line x1="1214.7" y1="340.6" x2="1214.7" y2="693.5" stroke="#666" stroke-width="1.6"/>
<line x1="1214.7" y1="693.5" x2="2068.0" y2="693.5" stroke="#666" stroke-width="1.6"/>
<line x1="1205.7" y1="340.60" x2="1214.7" y2="340.60" stroke="#666" stroke-width="1.6"/>
<line x1="1205.7" y1="513.80" x2="1214.7" y2="513.80" stroke="#666" stroke-width="1.6"/>
<line x1="1205.7" y1="603.65" x2="1214.7" y2="603.65" stroke="#666" stroke-width="1.6"/>
<line x1="1205.7" y1="693.50" x2="1214.7" y2="693.50" stroke="#666" stroke-width="1.6"/>
<line x1="1257.37" y1="693.5" x2="1257.37" y2="701.5" stroke="#666" stroke-width="1.6"/>
<line x1="1314.25" y1="693.5" x2="1314.25" y2="701.5" stroke="#666" stroke-width="1.6"/>
<line x1="1371.14" y1="693.5" x2="1371.14" y2="701.5" stroke="#666" stroke-width="1.6"/>
<line x1="1428.03" y1="693.5" x2="1428.03" y2="701.5" stroke="#666" stroke-width="1.6"/>
<line x1="1484.91" y1="693.5" x2="1484.91" y2="701.5" stroke="#666" stroke-width="1.6"/>
<line x1="1541.80" y1="693.5" x2="1541.80" y2="701.5" stroke="#666" stroke-width="1.6"/>
<line x1="1598.68" y1="693.5" x2="1598.68" y2="701.5" stroke="#666" stroke-width="1.6"/>
<line x1="1655.57" y1="693.5" x2="1655.57" y2="701.5" stroke="#666" stroke-width="1.6"/>
<line x1="1712.46" y1="693.5" x2="1712.46" y2="701.5" stroke="#666" stroke-width="1.6"/>
<line x1="1769.35" y1="693.5" x2="1769.35" y2="701.5" stroke="#666" stroke-width="1.6"/>
<line x1="1826.23" y1="693.5" x2="1826.23" y2="701.5" stroke="#666" stroke-width="1.6"/>
<line x1="1883.12" y1="693.5" x2="1883.12" y2="701.5" stroke="#666" stroke-width="1.6"/>
<line x1="1940.01" y1="693.5" x2="1940.01" y2="701.5" stroke="#666" stroke-width="1.6"/>
<line x1="1996.89" y1="693.5" x2="1996.89" y2="701.5" stroke="#666" stroke-width="1.6"/>
<line x1="2053.78" y1="693.5" x2="2053.78" y2="701.5" stroke="#666" stroke-width="1.6"/>
<rect x="1525.3" y="745.2" width="19.5" height="14.4" fill="#8884d8"/>
</svg>
<div class="t" style="left:38.00px;top:39.70px;font:bold 24px/24px 'Liberation Serif';color:#141414;letter-spacing:0px;transform:scaleX(1.0136);transform-origin:left 50%;">ENERGY CONSUMPTION REPORT</div>
<div class="t" style="left:145.60px;top:168.05px;font:normal 22.5px/22.5px 'Liberation Sans';color:#333;letter-spacing:0px;transform:scaleX(1.0246);transform-origin:left 50%;">Day</div>
<div class="t" style="left:259.80px;top:168.05px;font:normal 22.5px/22.5px 'Liberation Sans';color:#333;letter-spacing:0px;transform:scaleX(1.0721);transform-origin:left 50%;">Hour</div>
<div class="t" style="left:527.10px;top:142.76px;font:normal 16px/16px 'Liberation Sans';color:#666;letter-spacing:0px;transform:scaleX(1.1200);transform-origin:left 50%;">From Date *</div>
<div class="t" style="left:527.10px;top:168.80px;font:normal 21.5px/21.5px 'Liberation Sans';color:#2e2e2e;letter-spacing:0px;transform:scaleX(1.1350);transform-origin:left 50%;">07/01/2025</div>
<div class="t" style="left:935.30px;top:142.76px;font:normal 16px/16px 'Liberation Sans';color:#666;letter-spacing:0px;transform:scaleX(1.1200);transform-origin:left 50%;">To Date *</div>
<div class="t" style="left:934.30px;top:168.80px;font:normal 21.5px/21.5px 'Liberation Sans';color:#2e2e2e;letter-spacing:0px;transform:scaleX(1.1350);transform-origin:left 50%;">07/31/</div>
<div class="t" style="left:1002.15px;top:168.80px;font:normal 21.5px/21.5px 'Liberation Sans';color:#7a7a7a;letter-spacing:0px;transform:scaleX(1.1350);transform-origin:left 50%;">2025</div>
<div class="t" style="left:1340.60px;top:142.76px;font:normal 16px/16px 'Liberation Sans';color:#666;letter-spacing:0px;transform:scaleX(1.1200);transform-origin:left 50%;">Energy Source</div>
<div class="t" style="left:1341.40px;top:168.80px;font:normal 21.5px/21.5px 'Liberation Sans';color:#2e2e2e;letter-spacing:0px;transform:scaleX(1.1350);transform-origin:left 50%;">All</div>
<div class="t" style="left:1861.75px;top:168.24px;font:normal 18.5px/18.5px 'Liberation Sans';color:#f4f4f4;letter-spacing:0px;transform:scaleX(1.0699);transform-origin:center 50%;-webkit-text-stroke:0.25px #f4f4f4;">SEARCH</div>
<div class="t" style="left:100.30px;top:293.95px;font:bold 20.5px/20.5px 'Liberation Sans';color:#1e2226;letter-spacing:1.0px;transform:scaleX(1.0680);transform-origin:left 50%;">Top 5 Devices</div>
<div class="t" style="left:1118.60px;top:293.95px;font:bold 20.5px/20.5px 'Liberation Sans';color:#1e2226;letter-spacing:1.0px;transform:scaleX(1.0786);transform-origin:left 50%;">Total KWh Per Day</div>
<div class="t" style="left:541.90px;top:485.18px;font:bold 16.5px/16.5px 'Liberation Sans';color:#fff;letter-spacing:0px;transform:scaleX(1.0791);transform-origin:center 50%;-webkit-text-stroke:0;font-weight:600;">44.8%</div>
<div class="t" style="left:324.68px;top:630.93px;font:bold 16.5px/16.5px 'Liberation Sans';color:#fff;letter-spacing:0px;transform:scaleX(1.0899);transform-origin:center 50%;-webkit-text-stroke:0;font-weight:600;">20%</div>
<div class="t" style="left:202.70px;top:526.33px;font:bold 16.5px/16.5px 'Liberation Sans';color:#fff;letter-spacing:0px;transform:scaleX(1.0578);transform-origin:center 50%;-webkit-text-stroke:0;font-weight:600;">14.7%</div>
<div class="t" style="left:233.30px;top:433.43px;font:bold 16.5px/16.5px 'Liberation Sans';color:#fff;letter-spacing:0px;transform:scaleX(1.0684);transform-origin:center 50%;-webkit-text-stroke:0;font-weight:600;">10.9%</div>
<div class="t" style="left:322.00px;top:381.23px;font:bold 16.5px/16.5px 'Liberation Sans';color:#fff;letter-spacing:0px;transform:scaleX(1.0769);transform-origin:center 50%;-webkit-text-stroke:0;font-weight:600;">9.6%</div>
<div class="t" style="left:746.80px;top:333.56px;font:normal 16px/16px 'Liberation Sans';color:#222;letter-spacing:0px;transform:scaleX(1.1450);transform-origin:left 50%;">Compressor-Atlas : 10712.10 Kwh</div>
<div class="t" style="left:746.80px;top:359.76px;font:normal 16px/16px 'Liberation Sans';color:#222;letter-spacing:0px;transform:scaleX(1.1450);transform-origin:left 50%;">Laser Cut : 4779.32 Kwh</div>
<div class="t" style="left:746.80px;top:385.86px;font:normal 16px/16px 'Liberation Sans';color:#222;letter-spacing:0px;transform:scaleX(1.1450);transform-origin:left 50%;">Compressor-ELGi : 3503.14 Kwh</div>
<div class="t" style="left:746.80px;top:411.86px;font:normal 16px/16px 'Liberation Sans';color:#222;letter-spacing:0px;transform:scaleX(1.1450);transform-origin:left 50%;">Paint Booth Yellow : 2594.12 Kwh</div>
<div class="t" style="left:746.80px;top:437.96px;font:normal 16px/16px 'Liberation Sans';color:#222;letter-spacing:0px;transform:scaleX(1.1450);transform-origin:left 50%;">Paint Booth Blue : 2299.73 Kwh</div>
<div class="t" style="left:1245.69px;top:702.72px;font:normal 21px/21px 'Liberation Sans';color:#666;letter-spacing:0px;transform:scaleX(1.1000);transform-origin:center 50%;">29</div>
<div class="t" style="left:1302.57px;top:702.72px;font:normal 21px/21px 'Liberation Sans';color:#666;letter-spacing:0px;transform:scaleX(1.1000);transform-origin:center 50%;">27</div>
<div class="t" style="left:1359.46px;top:702.72px;font:normal 21px/21px 'Liberation Sans';color:#666;letter-spacing:0px;transform:scaleX(1.1000);transform-origin:center 50%;">25</div>
<div class="t" style="left:1416.35px;top:702.72px;font:normal 21px/21px 'Liberation Sans';color:#666;letter-spacing:0px;transform:scaleX(1.1000);transform-origin:center 50%;">23</div>
<div class="t" style="left:1473.23px;top:702.72px;font:normal 21px/21px 'Liberation Sans';color:#666;letter-spacing:0px;transform:scaleX(1.1000);transform-origin:center 50%;">21</div>
<div class="t" style="left:1530.12px;top:702.72px;font:normal 21px/21px 'Liberation Sans';color:#666;letter-spacing:0px;transform:scaleX(1.1000);transform-origin:center 50%;">19</div>
<div class="t" style="left:1587.01px;top:702.72px;font:normal 21px/21px 'Liberation Sans';color:#666;letter-spacing:0px;transform:scaleX(1.1000);transform-origin:center 50%;">17</div>
<div class="t" style="left:1643.89px;top:702.72px;font:normal 21px/21px 'Liberation Sans';color:#666;letter-spacing:0px;transform:scaleX(1.1000);transform-origin:center 50%;">15</div>
<div class="t" style="left:1700.78px;top:702.72px;font:normal 21px/21px 'Liberation Sans';color:#666;letter-spacing:0px;transform:scaleX(1.1000);transform-origin:center 50%;">13</div>
<div class="t" style="left:1758.44px;top:702.72px;font:normal 21px/21px 'Liberation Sans';color:#666;letter-spacing:0px;transform:scaleX(1.1000);transform-origin:center 50%;">11</div>
<div class="t" style="left:1814.55px;top:702.72px;font:normal 21px/21px 'Liberation Sans';color:#666;letter-spacing:0px;transform:scaleX(1.1000);transform-origin:center 50%;">09</div>
<div class="t" style="left:1871.44px;top:702.72px;font:normal 21px/21px 'Liberation Sans';color:#666;letter-spacing:0px;transform:scaleX(1.1000);transform-origin:center 50%;">07</div>
<div class="t" style="left:1928.33px;top:702.72px;font:normal 21px/21px 'Liberation Sans';color:#666;letter-spacing:0px;transform:scaleX(1.1000);transform-origin:center 50%;">05</div>
<div class="t" style="left:1985.21px;top:702.72px;font:normal 21px/21px 'Liberation Sans';color:#666;letter-spacing:0px;transform:scaleX(1.1000);transform-origin:center 50%;">03</div>
<div class="t" style="left:2042.10px;top:702.72px;font:normal 21px/21px 'Liberation Sans';color:#666;letter-spacing:0px;transform:scaleX(1.1000);transform-origin:center 50%;">01</div>
<div class="t" style="left:1125.58px;top:340.42px;font:normal 21px/21px 'Liberation Sans';color:#666;letter-spacing:0px;transform:scaleX(1.0932);transform-origin:right 50%;">1571.12</div>
<div class="t" style="left:1166.45px;top:504.02px;font:normal 21px/21px 'Liberation Sans';color:#666;letter-spacing:0px;transform:scaleX(1.1000);transform-origin:right 50%;">800</div>
<div class="t" style="left:1166.45px;top:594.02px;font:normal 21px/21px 'Liberation Sans';color:#666;letter-spacing:0px;transform:scaleX(1.1000);transform-origin:right 50%;">400</div>
<div class="t" style="left:1189.81px;top:683.72px;font:normal 21px/21px 'Liberation Sans';color:#666;letter-spacing:0px;transform:scaleX(1.1000);transform-origin:right 50%;">0</div>
<div class="t" style="left:1552.40px;top:740.52px;font:normal 21px/21px 'Liberation Sans';color:#8884d8;letter-spacing:0px;transform:scaleX(1.1267);transform-origin:left 50%;">totalKWh</div>
<div class="t" style="left:1014.43px;top:845.12px;font:normal 21px/21px 'Liberation Sans';color:#fff;letter-spacing:0px;transform:scaleX(1.0339);transform-origin:center 50%;-webkit-text-stroke:0.5px #fff;">HIDE REPORT</div>
</body></html>
